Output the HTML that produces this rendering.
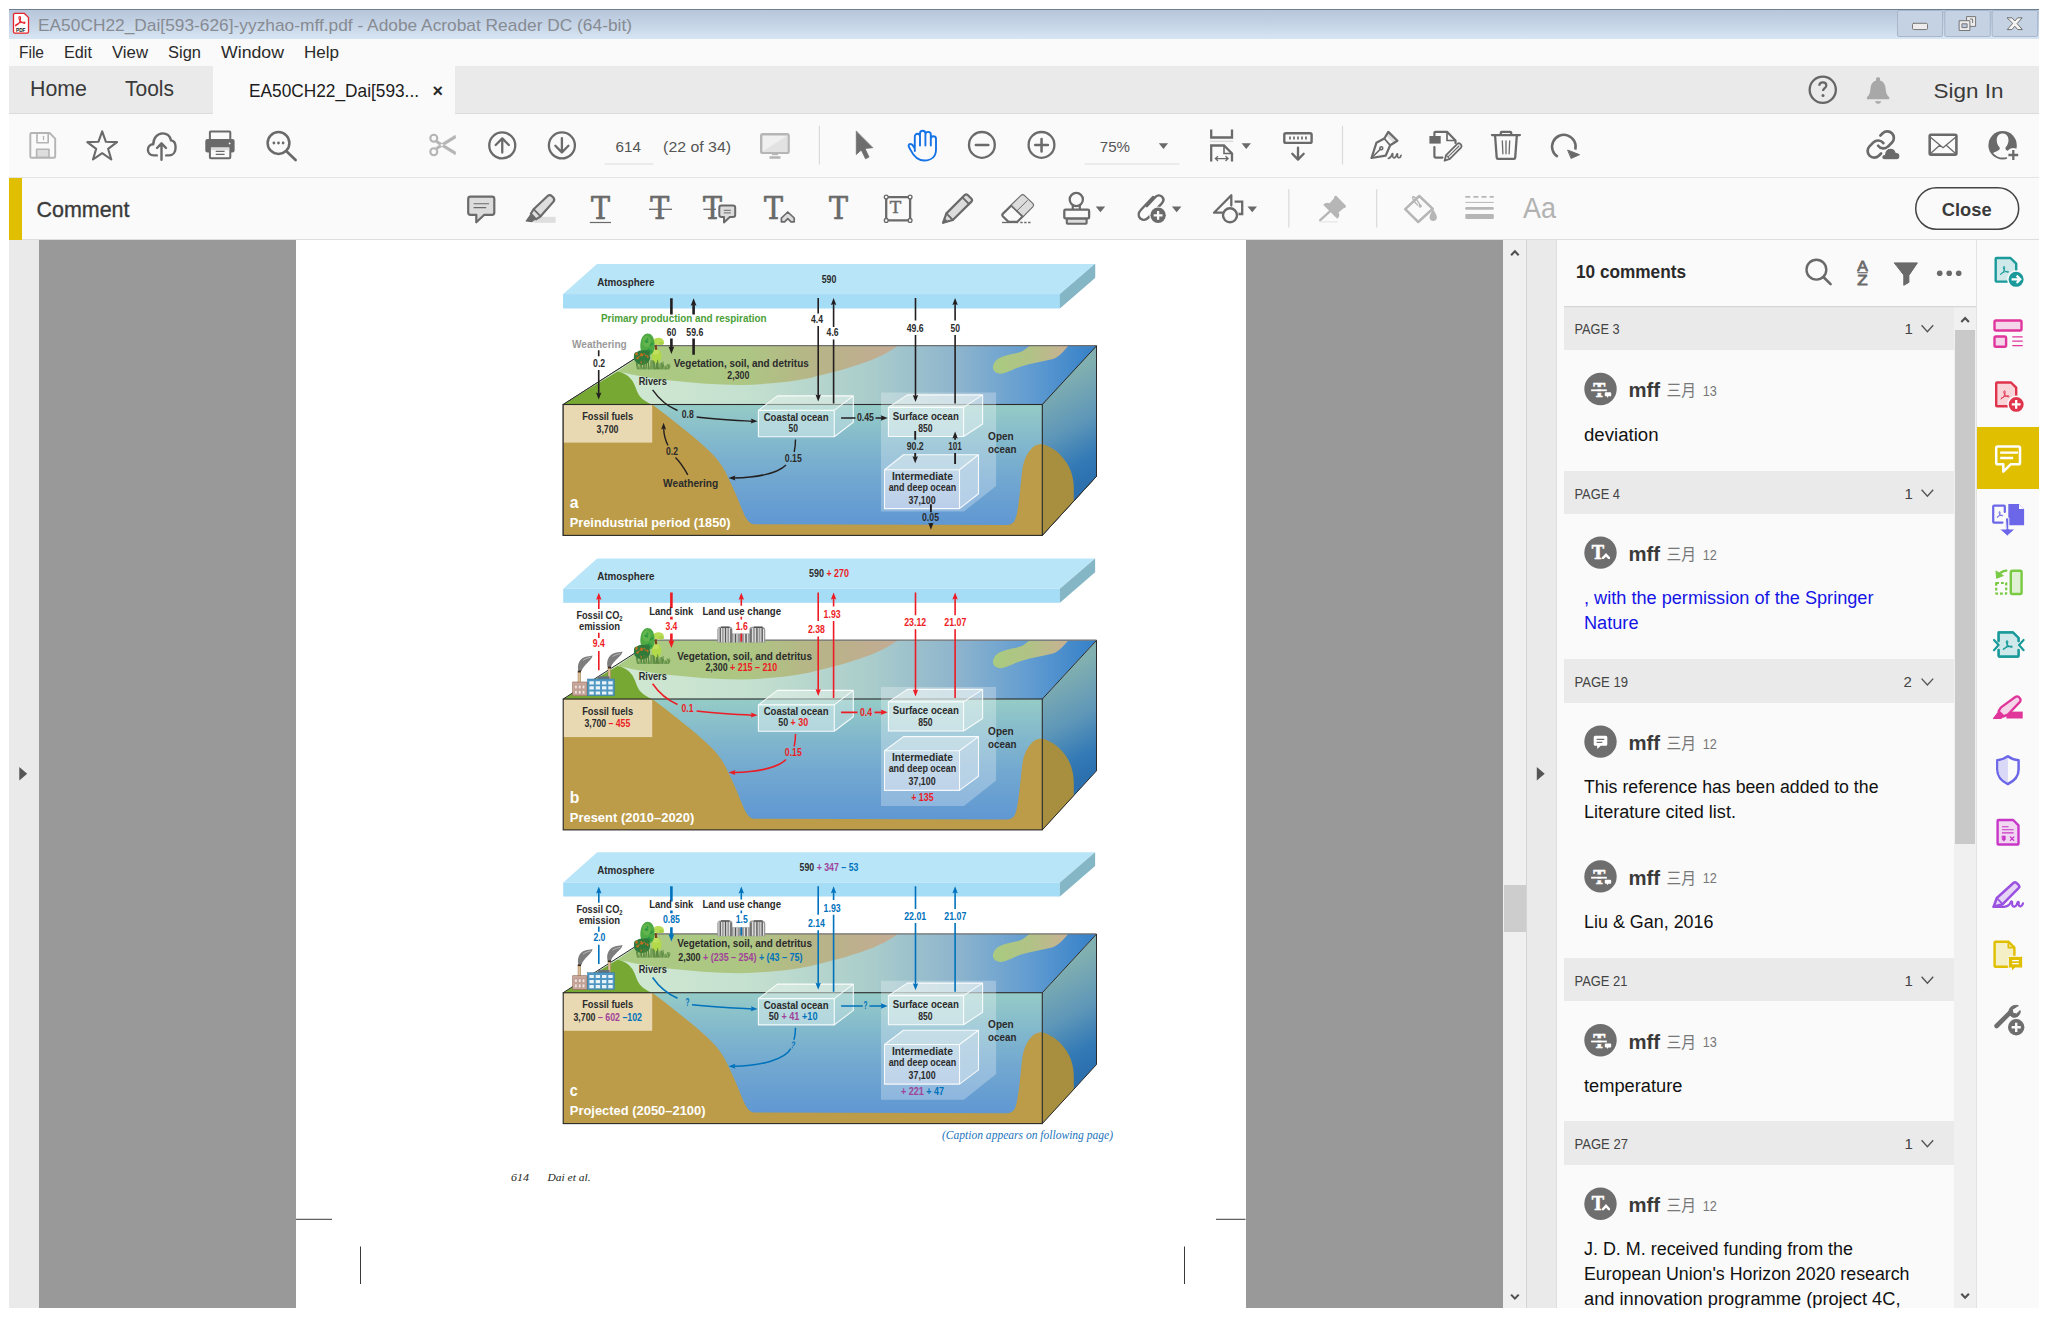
<!DOCTYPE html>
<html lang="en">
<head>
<meta charset="utf-8">
<title>EA50CH22_Dai[593-626]-yyzhao-mff.pdf - Adobe Acrobat Reader DC (64-bit)</title>
<style>
html,body{margin:0;padding:0;}
body{width:2048px;height:1317px;overflow:hidden;background:#fff;position:relative;
 font-family:"Liberation Sans","Noto Sans CJK SC",sans-serif;color:#333;}
.abs{position:absolute;}
.t{position:absolute;white-space:nowrap;line-height:1;}
#win{position:absolute;left:9px;top:9px;width:2030px;height:1299px;background:#fafafa;overflow:hidden;}
/* coordinates inside #win are screen coords minus 9 */
#titlebar{left:0;top:0;width:2030px;height:30px;background:linear-gradient(#b7c6d9 0%,#c3d2e4 45%,#d7e5f3 100%);border-top:1px solid #6f7f92;box-sizing:border-box;}
#menubar{left:0;top:30px;width:2030px;height:27px;background:#fafafa;}
#tabbar{left:0;top:56.5px;width:2030px;height:48px;background:#eaeaea;border-bottom:1px solid #dcdcdc;box-sizing:border-box;}
#tabactive{left:204px;top:56.5px;width:242px;height:48.5px;background:#fafafa;}
#toolbar{left:0;top:105px;width:2030px;height:64px;background:#fafafa;border-bottom:1.5px solid #e4e4e4;box-sizing:border-box;}
#commentbar{left:0;top:169px;width:2030px;height:62px;background:#fafafa;border-bottom:1px solid #dedede;box-sizing:border-box;}
#yellowbar{left:0;top:169px;width:13px;height:61.5px;background:#e0be00;}
#leftstrip{left:0;top:231px;width:29.5px;height:1068px;background:#eaeaea;}
#docbg{left:29.5px;top:231px;width:1464px;height:1068px;background:#999999;}
#page{left:287px;top:231px;width:950px;height:1068px;background:#fff;}
#docscroll{left:1493.5px;top:231px;width:24.5px;height:1068px;background:#f0f0f0;border-right:1px solid #d4d4d4;box-sizing:border-box;}
#docthumb{left:1495px;top:875.5px;width:21.5px;height:47px;background:#cdcdcd;}
#midstrip{left:1518px;top:231px;width:30px;height:1068px;background:#eaeaea;border-right:1px solid #dedede;box-sizing:border-box;}
#panel{left:1547.5px;top:231px;width:419px;height:1068px;background:#fafafa;}
#rstrip{left:1966.5px;top:231px;width:63.5px;height:1068px;background:#fafafa;border-left:1.5px solid #e2e2e2;box-sizing:border-box;}
#ractive{left:1968px;top:418px;width:62px;height:62px;background:#e0be00;}
.ghead{position:absolute;left:1555px;width:390px;height:43.5px;background:#eaeaea;}
#cscroll{left:1945px;top:297px;width:21.5px;height:1002px;background:#f0f0f0;}
#cthumb{left:1946px;top:321px;width:20px;height:514px;background:#c9c9c9;}
</style>
</head>
<body>
<div id="win">
<!--CHROME-->
<div id="titlebar" class="abs"></div>
<div id="menubar" class="abs"></div>
<div id="tabbar" class="abs"></div>
<div id="tabactive" class="abs"></div>
<div id="toolbar" class="abs"></div>
<div id="commentbar" class="abs"></div>
<div id="yellowbar" class="abs"></div>
<div id="leftstrip" class="abs"></div>
<div id="docbg" class="abs"></div>
<div id="page" class="abs"></div>
<div id="docscroll" class="abs"></div>
<div id="docthumb" class="abs"></div>
<div id="midstrip" class="abs"></div>
<div id="panel" class="abs"></div>
<div id="rstrip" class="abs"></div>
<div id="ractive" class="abs"></div>
<div id="cscroll" class="abs"></div>
<div id="cthumb" class="abs"></div>
<!--GHEADS-->
<div class="ghead" style="top:297px"></div>
<div class="ghead" style="top:461.5px"></div>
<div class="ghead" style="top:650.3px"></div>
<div class="ghead" style="top:948.5px"></div>
<div class="ghead" style="top:1112px"></div>
<!--TEXT-->
<svg class="abs" style="left:0;top:0" width="2030" height="1299" viewBox="9 9 2030 1299" font-family="Liberation Sans, Noto Sans CJK SC, sans-serif">
<text x="38.0" y="30.6" font-size="16.6" fill="#878b92" textLength="594.0" lengthAdjust="spacingAndGlyphs">EA50CH22_Dai[593-626]-yyzhao-mff.pdf - Adobe Acrobat Reader DC (64-bit)</text>
<text x="19.0" y="58.0" font-size="16.8" fill="#2a2a2a" textLength="25.0" lengthAdjust="spacingAndGlyphs">File</text>
<text x="64.0" y="58.0" font-size="16.8" fill="#2a2a2a" textLength="28.0" lengthAdjust="spacingAndGlyphs">Edit</text>
<text x="112.0" y="58.0" font-size="16.8" fill="#2a2a2a" textLength="36.0" lengthAdjust="spacingAndGlyphs">View</text>
<text x="168.0" y="58.0" font-size="16.8" fill="#2a2a2a" textLength="33.0" lengthAdjust="spacingAndGlyphs">Sign</text>
<text x="221.0" y="58.0" font-size="16.8" fill="#2a2a2a" textLength="63.0" lengthAdjust="spacingAndGlyphs">Window</text>
<text x="304.0" y="58.0" font-size="16.8" fill="#2a2a2a" textLength="35.0" lengthAdjust="spacingAndGlyphs">Help</text>
<text x="30.0" y="96.0" font-size="22.4" fill="#3a3a3a" textLength="57.0" lengthAdjust="spacingAndGlyphs">Home</text>
<text x="125.0" y="96.0" font-size="22.4" fill="#3a3a3a" textLength="49.0" lengthAdjust="spacingAndGlyphs">Tools</text>
<text x="249.0" y="97.0" font-size="18.4" fill="#1c1c1c" textLength="170.0" lengthAdjust="spacingAndGlyphs">EA50CH22_Dai[593...</text>
<text x="432.5" y="96.5" font-size="19" fill="#2a2a2a" font-weight="bold" textLength="10.5" lengthAdjust="spacingAndGlyphs">×</text>
<text x="1933.5" y="98.3" font-size="20.6" fill="#3a3a3a" textLength="70.0" lengthAdjust="spacingAndGlyphs">Sign In</text>
<text x="615.6" y="151.9" font-size="15.2" fill="#555" textLength="25.4" lengthAdjust="spacingAndGlyphs">614</text>
<text x="663.1" y="151.9" font-size="15.2" fill="#555" textLength="67.9" lengthAdjust="spacingAndGlyphs">(22 of 34)</text>
<text x="1099.8" y="151.9" font-size="15.2" fill="#555" textLength="30.2" lengthAdjust="spacingAndGlyphs">75%</text>
<text x="36.5" y="217.0" font-size="21.8" fill="#3a3a3a" textLength="93.0" lengthAdjust="spacingAndGlyphs" stroke="#3a3a3a" stroke-width=".35">Comment</text>
<text x="1941.7" y="215.7" font-size="19" fill="#3a3a3a" font-weight="bold" textLength="49.9" lengthAdjust="spacingAndGlyphs">Close</text>
<text x="1576.0" y="277.5" font-size="17.6" fill="#2a2a2a" font-weight="bold" textLength="110.0" lengthAdjust="spacingAndGlyphs">10 comments</text>
<text x="1574.5" y="334.0" font-size="15.4" fill="#444" textLength="45.0" lengthAdjust="spacingAndGlyphs">PAGE 3</text>
<text x="1904.5" y="334.0" font-size="15" fill="#444">1</text>
<text x="1574.5" y="498.5" font-size="15.4" fill="#444" textLength="45.5" lengthAdjust="spacingAndGlyphs">PAGE 4</text>
<text x="1904.5" y="498.5" font-size="15" fill="#444">1</text>
<text x="1574.5" y="687.3" font-size="15.4" fill="#444" textLength="53.5" lengthAdjust="spacingAndGlyphs">PAGE 19</text>
<text x="1903.5" y="687.3" font-size="15" fill="#444">2</text>
<text x="1574.5" y="985.5" font-size="15.4" fill="#444" textLength="53.0" lengthAdjust="spacingAndGlyphs">PAGE 21</text>
<text x="1904.5" y="985.5" font-size="15" fill="#444">1</text>
<text x="1574.5" y="1149.0" font-size="15.4" fill="#444" textLength="53.5" lengthAdjust="spacingAndGlyphs">PAGE 27</text>
<text x="1904.5" y="1149.0" font-size="15" fill="#444">1</text>
<text x="1628.5" y="397.3" font-size="19.4" fill="#3a3a3a" font-weight="bold" textLength="31.6" lengthAdjust="spacingAndGlyphs">mff</text>
<text x="1666.5" y="396.4" font-size="16.4" fill="#777" textLength="29.5" lengthAdjust="spacingAndGlyphs">三月</text>
<text x="1702.8" y="396.0" font-size="14.6" fill="#777" textLength="14.1" lengthAdjust="spacingAndGlyphs">13</text>
<text x="1584.0" y="440.5" font-size="19.2" fill="#111" textLength="74.5" lengthAdjust="spacingAndGlyphs">deviation</text>
<text x="1628.5" y="560.9" font-size="19.4" fill="#3a3a3a" font-weight="bold" textLength="31.6" lengthAdjust="spacingAndGlyphs">mff</text>
<text x="1666.5" y="560.0" font-size="16.4" fill="#777" textLength="29.5" lengthAdjust="spacingAndGlyphs">三月</text>
<text x="1702.8" y="559.6" font-size="14.6" fill="#777" textLength="14.1" lengthAdjust="spacingAndGlyphs">12</text>
<text x="1584.0" y="604.1" font-size="19.2" fill="#1414e6" textLength="289.5" lengthAdjust="spacingAndGlyphs">, with the permission of the Springer</text>
<text x="1584.0" y="629.1" font-size="19.2" fill="#1414e6" textLength="54.5" lengthAdjust="spacingAndGlyphs">Nature</text>
<text x="1628.5" y="749.9" font-size="19.4" fill="#3a3a3a" font-weight="bold" textLength="31.6" lengthAdjust="spacingAndGlyphs">mff</text>
<text x="1666.5" y="749.0" font-size="16.4" fill="#777" textLength="29.5" lengthAdjust="spacingAndGlyphs">三月</text>
<text x="1702.8" y="748.6" font-size="14.6" fill="#777" textLength="14.1" lengthAdjust="spacingAndGlyphs">12</text>
<text x="1584.0" y="793.1" font-size="19.2" fill="#111" textLength="294.5" lengthAdjust="spacingAndGlyphs">This reference has been added to the</text>
<text x="1584.0" y="818.1" font-size="19.2" fill="#111" textLength="152.0" lengthAdjust="spacingAndGlyphs">Literature cited list.</text>
<text x="1628.5" y="884.7" font-size="19.4" fill="#3a3a3a" font-weight="bold" textLength="31.6" lengthAdjust="spacingAndGlyphs">mff</text>
<text x="1666.5" y="883.8" font-size="16.4" fill="#777" textLength="29.5" lengthAdjust="spacingAndGlyphs">三月</text>
<text x="1702.8" y="883.4" font-size="14.6" fill="#777" textLength="14.1" lengthAdjust="spacingAndGlyphs">12</text>
<text x="1584.0" y="927.9" font-size="19.2" fill="#111" textLength="129.5" lengthAdjust="spacingAndGlyphs">Liu &amp; Gan, 2016</text>
<text x="1628.5" y="1048.5" font-size="19.4" fill="#3a3a3a" font-weight="bold" textLength="31.6" lengthAdjust="spacingAndGlyphs">mff</text>
<text x="1666.5" y="1047.6" font-size="16.4" fill="#777" textLength="29.5" lengthAdjust="spacingAndGlyphs">三月</text>
<text x="1702.8" y="1047.2" font-size="14.6" fill="#777" textLength="14.1" lengthAdjust="spacingAndGlyphs">13</text>
<text x="1584.0" y="1091.7" font-size="19.2" fill="#111" textLength="98.5" lengthAdjust="spacingAndGlyphs">temperature</text>
<text x="1628.5" y="1212.0" font-size="19.4" fill="#3a3a3a" font-weight="bold" textLength="31.6" lengthAdjust="spacingAndGlyphs">mff</text>
<text x="1666.5" y="1211.1" font-size="16.4" fill="#777" textLength="29.5" lengthAdjust="spacingAndGlyphs">三月</text>
<text x="1702.8" y="1210.7" font-size="14.6" fill="#777" textLength="14.1" lengthAdjust="spacingAndGlyphs">12</text>
<text x="1584.0" y="1255.2" font-size="19.2" fill="#111" textLength="269.0" lengthAdjust="spacingAndGlyphs">J. D. M. received funding from the</text>
<text x="1584.0" y="1280.2" font-size="19.2" fill="#111" textLength="325.5" lengthAdjust="spacingAndGlyphs">European Union's Horizon 2020 research</text>
<text x="1584.0" y="1305.2" font-size="19.2" fill="#111" textLength="316.5" lengthAdjust="spacingAndGlyphs">and innovation programme (project 4C,</text>
</svg>
<!--FIGURE-->
<svg class="abs" style="left:287px;top:231px" width="950" height="1068" viewBox="296 240 950 1068" font-family="Liberation Sans, sans-serif" font-weight="bold" font-size="10.4">
<defs>
<linearGradient id="gTop" gradientUnits="userSpaceOnUse" x1="600" y1="0" x2="1097" y2="0">
<stop offset="0" stop-color="#d2ead2"/><stop offset=".3" stop-color="#c4e0cf"/><stop offset=".55" stop-color="#a9cccb"/><stop offset=".72" stop-color="#8db4cd"/><stop offset=".86" stop-color="#639dd1"/><stop offset="1" stop-color="#3480c8"/>
</linearGradient>
<linearGradient id="gVeg" gradientUnits="userSpaceOnUse" x1="620" y1="0" x2="900" y2="0">
<stop offset="0" stop-color="#aacb82"/><stop offset=".45" stop-color="#adc683"/><stop offset=".7" stop-color="#b7b487"/><stop offset="1" stop-color="#c4ab95"/>
</linearGradient>
<linearGradient id="gIsl" gradientUnits="userSpaceOnUse" x1="993" y1="0" x2="1068" y2="0">
<stop offset="0" stop-color="#a9cb80"/><stop offset=".5" stop-color="#b1c286"/><stop offset="1" stop-color="#c9b093"/>
</linearGradient>
<linearGradient id="gFront" gradientUnits="userSpaceOnUse" x1="0" y1="404" x2="0" y2="526">
<stop offset="0" stop-color="#96ccc6"/><stop offset=".3" stop-color="#83b9cc"/><stop offset=".6" stop-color="#72a8d0"/><stop offset="1" stop-color="#5f97d3"/>
</linearGradient>
<linearGradient id="gSide" gradientUnits="userSpaceOnUse" x1="1045" y1="385" x2="1095" y2="480">
<stop offset="0" stop-color="#82b0b0"/><stop offset=".45" stop-color="#5f97b8"/><stop offset=".8" stop-color="#3279b6"/><stop offset="1" stop-color="#2c70ae"/>
</linearGradient>
<linearGradient id="gInter" gradientUnits="userSpaceOnUse" x1="0" y1="455" x2="0" y2="510">
<stop offset="0" stop-color="#d5e6ee" stop-opacity=".75"/><stop offset="1" stop-color="#c3d2ec" stop-opacity=".85"/>
</linearGradient>
</defs>
<g id="figbase">
<polygon points="597.2,264.1 1095.1,264.1 1059.9,294.3 563.2,294.3" fill="#b9e5f8"/>
<rect x="563.2" y="294.3" width="496.7" height="14" fill="#a5dcf6"/>
<polygon points="1095.1,264.1 1095.1,277.7 1059.9,308.3 1059.9,294.3" fill="#85b6c6"/>
<polygon points="563.2,404.5 655,345.7 1096.5,345.7 1042.3,404.5" fill="url(#gTop)"/>
<path d="M655,345.7 L898,345.7 C889,352 880,357 866,362 C850,368 830,373 810,378 C790,382 765,384.5 740,385 C715,385 690,382.5 665,380 C645,377.5 630,374 617.4,371.5 Z" fill="url(#gVeg)"/>
<path d="M563.2,404.5 L617.4,371.5 C624,372.5 629,376 632.5,381 C636,387 636.5,392 640,396.5 C643,400 647,402.5 652.2,404.5 Z" fill="#76a833"/>
<path d="M1029.8,345.9 L1068,345.9 C1064,351 1060,356 1053,359 C1043,361.5 1031,363.5 1021,366.4 C1012,369.5 1006,373.5 1000.5,373.7 C995,373.5 992,369.5 993.2,365.5 C994.5,361 998,358 1003,356.5 C1010,354 1017,353.5 1021,351.7 C1025,350 1027,347.5 1029.8,345.9 Z" fill="url(#gIsl)"/>
<rect x="563.2" y="404.5" width="479.1" height="130.9" fill="url(#gFront)"/>
<path d="M563.2,404.5 L652.2,404.5 L665.5,414.6 L691.8,435.6 C696,439 700,442.5 703.9,446 C709.5,451 714,455.5 718,460.6 C721.5,465 724.5,470 727,475.2 C729.8,480.600 732.300,486 734.700,491.700 C737.5,497.5 739.5,503.5 742,509.3 C743.5,513 745,516.5 747.1,519.6 C749,522.5 751,524 753.7,524.3 L1008,525 C1012,524.5 1014,522.5 1015.2,519.6 C1016.7,515.5 1017.5,511 1018.1,506.4 C1019,500.5 1019.7,494.5 1020.3,488.8 C1021,482 1021.5,475 1022.5,468.3 C1023.3,463.5 1024.8,459 1026.9,455.1 C1028.8,451.5 1031.3,448.5 1034.2,446.3 C1036.7,444.8 1039.5,444.2 1042.3,444.1 L1042.3,535.4 L563.2,535.4 Z" fill="#bc9c48"/>
<rect x="563.2" y="405" width="89" height="37.6" fill="#e8d9b3"/>
<polygon points="1042.3,404.5 1096.5,345.9 1096.5,476.3 1042.3,535.4" fill="url(#gSide)"/>
<path d="M1042.3,444.1 C1049,446 1054.5,449.5 1059,453.6 C1064,458.5 1068.5,464.5 1070.9,471.2 C1073,477 1073.8,483 1073.8,488.8 L1073.8,501.2 L1042.3,535.4 Z" fill="#a88f3f"/>
<path d="M655,345.7 L1096.5,345.7" stroke="#6f6f6f" stroke-width="1.3" fill="none"/>
<path d="M563.2,404.5 L655,345.7 M1042.3,404.5 L1096.5,345.9 L1096.5,476.3 L1042.3,535.4" stroke="#2a2a2a" stroke-width="1" fill="none" stroke-linejoin="round"/>
<rect x="563.2" y="404.5" width="479.1" height="130.9" fill="none" stroke="#2a2a2a" stroke-width="1.1"/>
<polygon points="881,392.5 996.1,392.5 996.1,485.9 963.9,511.5 881,511.5" fill="#fff" fill-opacity=".27"/>
<polygon points="758.4,410.4 777.4,395.9 853.3,395.9 834.3,410.4" fill="#eaf5ee" fill-opacity="0.5"/>
<polygon points="834.3,410.4 853.3,395.9 853.3,422.2 834.3,436.7" fill="#d8ecee" fill-opacity="0.4"/>
<rect x="758.4" y="410.4" width="75.89999999999998" height="26.30000000000001" fill="#d8ecee" fill-opacity="0.55"/>
<path d="M758.4,410.4 H834.3 V436.7 H758.4 Z M758.4,410.4 L777.4,395.9 H853.3 L834.3,410.4 M853.3,395.9 V422.2 L834.3,436.7" fill="none" stroke="#fff" stroke-opacity=".9" stroke-width="1.1" stroke-linejoin="round"/>
<polygon points="888.4,407.4 907.4,394.9 982.6,394.9 963.6,407.4" fill="#eef6f4" fill-opacity="0.55"/>
<polygon points="963.6,407.4 982.6,394.9 982.6,424.0 963.6,436.5" fill="#e2f0f0" fill-opacity="0.45"/>
<rect x="888.4" y="407.4" width="75.20000000000005" height="29.100000000000023" fill="#e2f0f0" fill-opacity="0.6"/>
<path d="M888.4,407.4 H963.6 V436.5 H888.4 Z M888.4,407.4 L907.4,394.9 H982.6 L963.6,407.4 M982.6,394.9 V424.0 L963.6,436.5" fill="none" stroke="#fff" stroke-opacity=".9" stroke-width="1.1" stroke-linejoin="round"/>
</g>
<g id="panelA" fill="#2b2b2b">
<use href="#figbase"/>
<polygon points="884.5,469.7 903.5,454.8 978.5,454.8 959.5,469.7" fill="#dbe9ee" fill-opacity="0.6"/>
<polygon points="959.5,469.7 978.5,454.8 978.5,493.70000000000005 959.5,508.6" fill="#d3e2ee" fill-opacity="0.55"/>
<rect x="884.5" y="469.7" width="75.0" height="38.900000000000034" fill="url(#gInter)"/>
<path d="M884.5,469.7 H959.5 V508.6 H884.5 Z M884.5,469.7 L903.5,454.8 H978.5 L959.5,469.7 M978.5,454.8 V493.70000000000005 L959.5,508.6" fill="none" stroke="#fff" stroke-opacity=".9" stroke-width="1.1" stroke-linejoin="round"/>
<g id="trees">
<ellipse cx="658.4" cy="341.4" rx="5.4" ry="3.6" fill="#b9dc55"/><ellipse cx="661.5" cy="343.2" rx="2.6" ry="1.8" fill="#a9d246"/>
<ellipse cx="656.6" cy="356.2" rx="4.9" ry="7" fill="#b2d94a"/><ellipse cx="655.6" cy="352" rx="3.4" ry="2.6" fill="#c2e05e"/>
<path d="M654.5,344.8 h2.2 l.6,5 h-2.2z" fill="#7a4518"/>
<path d="M647.6,333.6 C651.5,333.6 653.6,337 654.2,341 C655.2,346 654.6,351.5 651.6,354.2 C649.6,355.8 645.8,355.9 643.6,354.4 C640.6,352 639.8,347 640.6,342.5 C641.4,338 643.6,333.6 647.6,333.6Z" fill="#4faa45"/>
<ellipse cx="646.6" cy="341.5" rx="4.2" ry="5.8" fill="#62b54c"/>
<g fill="#2f9a40"><circle cx="646.9" cy="341.4" r="1.5"/><circle cx="650.6" cy="345.2" r="0.9"/><circle cx="645.4" cy="341.3" r="1.0"/><circle cx="645.2" cy="351.0" r="1.0"/><circle cx="643.6" cy="351.9" r="1.3"/><circle cx="652.0" cy="343.7" r="1.5"/><circle cx="649.0" cy="349.8" r="1.4"/><circle cx="647.5" cy="338.9" r="1.0"/><circle cx="651.0" cy="351.4" r="1.5"/></g>
<ellipse cx="642" cy="357.6" rx="8.2" ry="7.3" fill="#2f7a3b"/><ellipse cx="637.5" cy="355" rx="3.5" ry="3" fill="#2f7a3b"/><ellipse cx="646.5" cy="352.8" rx="3.5" ry="2.8" fill="#2f7a3b"/>
<g fill="#c46f1f"><circle cx="640.9" cy="362.4" r="1.1"/><circle cx="645.8" cy="355.6" r="0.9"/><circle cx="641.3" cy="353.9" r="1.0"/><circle cx="647.5" cy="356.0" r="0.8"/><circle cx="636.5" cy="354.3" r="1.2"/><circle cx="640.4" cy="355.5" r="0.8"/><circle cx="647.8" cy="357.0" r="0.9"/><circle cx="636.7" cy="353.1" r="0.9"/><circle cx="644.1" cy="354.1" r="0.8"/><circle cx="641.9" cy="355.1" r="1.3"/><circle cx="637.5" cy="358.1" r="1.2"/><circle cx="640.9" cy="362.9" r="1.0"/><circle cx="638.9" cy="356.8" r="0.8"/></g>
<path d="M637.5,369.4 L636.2,363.0 M638.6,369.4 L637.3,363.3 M639.8,369.4 L640.7,360.2 M641.1,369.4 L641.3,363.0 M642.2,369.4 L640.9,363.2 M643.2,369.4 L644.3,360.2 M644.6,369.4 L643.6,360.7 M645.7,369.4 L646.4,361.4 M647.1,369.4 L645.8,360.4 M648.4,369.4 L648.4,361.2 M649.4,369.4 L648.1,362.0 M650.8,369.4 L651.0,360.4 M651.9,369.4 L652.2,360.3 M653.4,369.4 L653.4,360.5 M654.5,369.4 L654.3,361.5 M655.5,369.4 L656.5,362.7 M656.4,369.4 L656.8,363.7 M657.5,369.4 L657.4,361.8 M658.6,369.4 L657.6,359.9 M659.7,369.4 L660.2,363.1 M660.8,369.4 L661.6,362.5 M661.9,369.4 L663.2,361.7 M662.9,369.4 L662.0,366.2 M664.2,369.4 L663.4,364.2 M665.3,369.4 L665.2,365.8 M666.3,369.4 L667.5,364.0 M667.7,369.4 L669.2,363.8 M668.6,369.4 L670.1,365.4" stroke="#4f8036" stroke-width=".9" stroke-opacity=".95" fill="none"/>
</g>
<path d="M671.4,298.2 V314.5 M671.4,338.5 V348.0" stroke="#231f20" stroke-width="2.6" fill="none"/><polygon points="671.4,354.0 668.5,346.5 671.4,347.6 674.3,346.5" fill="#231f20"/>
<path d="M693.6,304.2 V314.5 M693.6,338.5 V354.7" stroke="#231f20" stroke-width="2.6" fill="none"/><polygon points="693.6,298.2 696.5,305.7 693.6,304.6 690.7,305.7" fill="#231f20"/>
<path d="M818.2,298.0 V313.6 M818.2,326.0 V396.0" stroke="#231f20" stroke-width="1.6" fill="none"/><polygon points="818.2,401.6 815.5,394.6 818.2,395.6 820.9,394.6" fill="#231f20"/>
<path d="M833.6,303.6 V327.0 M833.6,339.5 V403.5" stroke="#231f20" stroke-width="1.6" fill="none"/><polygon points="833.6,298.0 836.3,305.0 833.6,304.0 830.9,305.0" fill="#231f20"/>
<path d="M915.5,298.0 V320.4 M915.5,335.0 V396.4" stroke="#231f20" stroke-width="1.6" fill="none"/><polygon points="915.5,402.0 912.8,395.0 915.5,396.0 918.2,395.0" fill="#231f20"/>
<path d="M955.1,303.6 V320.4 M955.1,335.0 V403.5" stroke="#231f20" stroke-width="1.6" fill="none"/><polygon points="955.1,298.0 957.8,305.0 955.1,304.0 952.4,305.0" fill="#231f20"/>
<path d="M598.7,350.3 V356.3 M598.7,370.0 V393.8" stroke="#231f20" stroke-width="1.6" fill="none"/><polygon points="598.7,399.4 596.0,392.4 598.7,393.4 601.4,392.4" fill="#231f20"/>
<path d="M915.2,430.9 V439.7 M915.2,452.9 V457.6" stroke="#231f20" stroke-width="1.9" fill="none"/><polygon points="915.2,463.2 912.5,456.2 915.2,457.2 917.9,456.2" fill="#231f20"/>
<path d="M955.1,437.2 V439.7 M955.1,452.9 V463.9" stroke="#231f20" stroke-width="1.9" fill="none"/><polygon points="955.1,431.6 957.8,438.6 955.1,437.6 952.4,438.6" fill="#231f20"/>
<path d="M930.9,504.2 V512.2 M930.9,523.0 V524.2" stroke="#231f20" stroke-width="1.9" fill="none"/><polygon points="930.9,529.8 928.2,522.8 930.9,523.8 933.6,522.8" fill="#231f20"/>
<path d="M841.1,418.0 H855.5 M875.5,418.0 H882.1" stroke="#231f20" stroke-width="1.6" fill="none"/><polygon points="887.7,418.0 880.7,420.7 881.7,418.0 880.7,415.3" fill="#231f20"/>
<path d="M652.6,389.8 C659,399 667,406 677.5,410.5 M696.6,417 C715,419.5 735,420.3 752,421.2" stroke="#231f20" stroke-width="1.4" fill="none"/><polygon points="757.6,421.3 750.7,423.6 751.8,421.1 750.9,418.6" fill="#231f20"/>
<path d="M795.5,439.5 C795.5,444 795,448 794.2,452 M786,465 C778,473 758,477.5 734,478" stroke="#231f20" stroke-width="1.4" fill="none"/><polygon points="728.6,478.1 735.4,475.6 734.4,478.1 735.4,480.6" fill="#231f20"/>
<path d="M687.8,474.9 C684,468 680,462 675.5,457.5 M668,445.5 C665,439.5 663.8,434 663.7,428.5" stroke="#231f20" stroke-width="1.4" fill="none"/><polygon points="663.6,422.8 666.1,429.6 663.6,428.6 661.1,429.6" fill="#231f20"/>
<text x="597.2" y="285.8" textLength="57.3" lengthAdjust="spacingAndGlyphs">Atmosphere</text>
<text x="829.0" y="282.8" text-anchor="middle" textLength="14.7" lengthAdjust="spacingAndGlyphs">590</text>
<text x="601.0" y="322.0" textLength="165.6" lengthAdjust="spacingAndGlyphs" fill="#4c9f38">Primary production and respiration</text>
<text x="671.4" y="335.9" text-anchor="middle" textLength="9.5" lengthAdjust="spacingAndGlyphs">60</text>
<text x="694.8" y="335.9" text-anchor="middle" textLength="17.0" lengthAdjust="spacingAndGlyphs">59.6</text>
<text x="817.0" y="322.7" text-anchor="middle" textLength="12.0" lengthAdjust="spacingAndGlyphs">4.4</text>
<text x="832.6" y="335.9" text-anchor="middle" textLength="12.0" lengthAdjust="spacingAndGlyphs">4.6</text>
<text x="915.2" y="331.7" text-anchor="middle" textLength="17.0" lengthAdjust="spacingAndGlyphs">49.6</text>
<text x="955.3" y="331.7" text-anchor="middle" textLength="9.5" lengthAdjust="spacingAndGlyphs">50</text>
<text x="572.0" y="347.6" textLength="54.7" lengthAdjust="spacingAndGlyphs" fill="#9a9a9a">Weathering</text>
<text x="599.1" y="367.1" text-anchor="middle" textLength="12.0" lengthAdjust="spacingAndGlyphs">0.2</text>
<text x="673.8" y="366.7" textLength="134.9" lengthAdjust="spacingAndGlyphs">Vegetation, soil, and detritus</text>
<text x="738.3" y="378.8" text-anchor="middle" textLength="22.0" lengthAdjust="spacingAndGlyphs">2,300</text>
<text x="638.7" y="385.4" textLength="28.1" lengthAdjust="spacingAndGlyphs">Rivers</text>
<text x="582.2" y="420.3" textLength="50.9" lengthAdjust="spacingAndGlyphs">Fossil fuels</text>
<text x="607.5" y="432.6" text-anchor="middle" textLength="22.0" lengthAdjust="spacingAndGlyphs">3,700</text>
<text x="687.8" y="417.7" text-anchor="middle" textLength="12.0" lengthAdjust="spacingAndGlyphs">0.8</text>
<text x="763.7" y="420.9" textLength="64.8" lengthAdjust="spacingAndGlyphs">Coastal ocean</text>
<text x="793.3" y="431.9" text-anchor="middle" textLength="9.5" lengthAdjust="spacingAndGlyphs">50</text>
<text x="865.4" y="421.4" text-anchor="middle" textLength="17.0" lengthAdjust="spacingAndGlyphs">0.45</text>
<text x="892.8" y="419.6" textLength="66.0" lengthAdjust="spacingAndGlyphs">Surface ocean</text>
<text x="925.5" y="431.6" text-anchor="middle" textLength="14.3" lengthAdjust="spacingAndGlyphs">850</text>
<text x="988.1" y="440.4" textLength="25.6" lengthAdjust="spacingAndGlyphs">Open</text>
<text x="988.1" y="453.3" textLength="28.3" lengthAdjust="spacingAndGlyphs">ocean</text>
<text x="915.2" y="450.0" text-anchor="middle" textLength="17.0" lengthAdjust="spacingAndGlyphs">90.2</text>
<text x="955.1" y="450.0" text-anchor="middle" textLength="13.5" lengthAdjust="spacingAndGlyphs">101</text>
<text x="922.4" y="480.0" text-anchor="middle" textLength="61.0" lengthAdjust="spacingAndGlyphs">Intermediate</text>
<text x="922.4" y="490.7" text-anchor="middle" textLength="67.5" lengthAdjust="spacingAndGlyphs">and deep ocean</text>
<text x="922.1" y="503.5" text-anchor="middle" textLength="27.0" lengthAdjust="spacingAndGlyphs">37,100</text>
<text x="930.5" y="520.8" text-anchor="middle" textLength="17.0" lengthAdjust="spacingAndGlyphs">0.05</text>
<text x="672.0" y="454.7" text-anchor="middle" textLength="12.0" lengthAdjust="spacingAndGlyphs">0.2</text>
<text x="793.3" y="462.1" text-anchor="middle" textLength="17.0" lengthAdjust="spacingAndGlyphs">0.15</text>
<text x="663.1" y="487.3" textLength="55.2" lengthAdjust="spacingAndGlyphs">Weathering</text>
<text x="569.8" y="507.9" textLength="8.8" lengthAdjust="spacingAndGlyphs" font-size="16.5" fill="#ffffff">a</text>
<text x="569.8" y="527.2" textLength="160.8" lengthAdjust="spacingAndGlyphs" font-size="12.8" fill="#ffffff">Preindustrial period (1850)</text>
</g>
<g id="panelB" fill="#2b2b2b">
<use href="#figbase" y="294.5"/>
<g transform="translate(0,294.5)"><polygon points="884.5,456.3 903.5,442.1 978.5,442.1 959.5,456.3" fill="#dbe9ee" fill-opacity="0.6"/>
<polygon points="959.5,456.3 978.5,442.1 978.5,481.7 959.5,495.9" fill="#d3e2ee" fill-opacity="0.55"/>
<rect x="884.5" y="456.3" width="75.0" height="39.599999999999966" fill="url(#gInter)"/>
<path d="M884.5,456.3 H959.5 V495.9 H884.5 Z M884.5,456.3 L903.5,442.1 H978.5 L959.5,456.3 M978.5,442.1 V481.7 L959.5,495.9" fill="none" stroke="#fff" stroke-opacity=".9" stroke-width="1.1" stroke-linejoin="round"/></g>
<use href="#trees" y="294.5"/>
<g id="factory">
<path d="M578.4,671 C577,665 579,659.8 583.6,657.4 C586.6,655.9 590,656.2 592.6,655.4 C591.8,658.8 589.6,660.4 587.8,662.4 C585,665.2 582.4,667.8 581.6,671 Z" fill="#7d7d7d"/>
<path d="M583,660.5 C585.5,658.5 588.5,658 590.5,657.2" stroke="#c4c4c4" stroke-width=".8" fill="none"/>
<path d="M607.6,667 C606.2,661 608.4,655.8 613.2,653.4 C616.2,651.9 619.8,652.2 622.6,651.4 C621.8,654.800 619.4,656.400 617.4,658.400 C614.4,661.400 611.800,663.800 611,667 Z" fill="#7d7d7d"/>
<path d="M612.5,656.5 C615,654.8 618,654.4 620.3,653.6" stroke="#c4c4c4" stroke-width=".8" fill="none"/>
<rect x="578" y="672" width="2.8" height="10.5" fill="#dcbf95" stroke="#8a6a4a" stroke-width=".4"/><rect x="577.8" y="670.6" width="3.2" height="1.8" fill="#3a2a20"/>
<rect x="608" y="668" width="2.8" height="11.5" fill="#dcbf95" stroke="#8a6a4a" stroke-width=".4"/><rect x="607.8" y="666.6" width="3.2" height="1.8" fill="#3a2a20"/>
<rect x="572.7" y="682" width="14.3" height="13.8" fill="#c9a79b" stroke="#8f6a5e" stroke-width=".6"/>
<path d="M574.6,685.2h2.6v3.6h-2.6z M578.4,685.2h2.6v3.6h-2.6z M582.2,685.2h2.6v3.6h-2.6z M574.6,690.4h2.6v3.6h-2.6z M578.4,690.4h2.6v3.6h-2.6z M582.2,690.4h2.6v3.6h-2.6z" fill="#efe2dc" stroke="#8f6a5e" stroke-width=".3"/>
<rect x="598" y="676.3" width="11.5" height="3" fill="#66737c"/>
<rect x="587.4" y="679" width="27.1" height="16.8" fill="#4f97c2" stroke="#3a789f" stroke-width=".5"/>
<path d="M589.4,681.2h4.4v3.2h-4.4z M595.7,681.2h4.4v3.2h-4.4z M602,681.2h4.4v3.2h-4.4z M608.3,681.2h4.4v3.2h-4.4z M589.4,686.3h4.4v3.2h-4.4z M595.7,686.3h4.4v3.2h-4.4z M602,686.3h4.4v3.2h-4.4z M608.3,686.3h4.4v3.2h-4.4z M589.4,691.4h4.4v3.2h-4.4z M595.7,691.4h4.4v3.2h-4.4z M602,691.4h4.4v3.2h-4.4z M608.3,691.4h4.4v3.2h-4.4z" fill="#e8f3f8"/>
</g>
<g id="luc">
<path d="M717.3,642.5 V630 q0,-2.8 3,-3.2 h9.5 q2.6,.2 2.6,3 v3.7 h17 v-3.7 q0,-2.8 2.6,-3 h9.7 q3.6,.4 3.6,3.2 v12.5 z" fill="#9a9a9a"/>
<path d="M719,628v14 M721.6,628v14 M724.2,627.5v15 M726.9,627.5v15 M729.6,628v14 M734,634v8.5 M737,634v8.5 M744.4,634v8.5 M747.6,634v8.5 M752.6,628v14 M755.4,627.5v15 M758.1,627.5v15 M760.9,628v14 M763.5,629v13" stroke="#ececec" stroke-width=".9" fill="none"/>
<path d="M720.3,628v14 M725.5,627.5v15 M731,629v13.5 M735.5,634v8.5 M746,634v8.5 M750.9,629v13.5 M757,627.5v15 M762.2,628v14" stroke="#444" stroke-width=".8" fill="none"/>
<path d="M721,627.2 h8.5 M753.8,627.2 h8.8" stroke="#555" stroke-width="1.5"/>
</g>
<path d="M598.8,598.4 V609.0 M598.8,632.8 V638.0 M598.8,651.1 V670.2" stroke="#ed1c24" stroke-width="1.6" fill="none"/><polygon points="598.8,592.8 601.5,599.8 598.8,598.8 596.1,599.8" fill="#ed1c24"/>
<path d="M671.4,592.5 V607.9 M671.4,616.7 V619.6 M671.4,633.5 V641.9" stroke="#ed1c24" stroke-width="2.6" fill="none"/><polygon points="671.4,647.9 668.5,640.4 671.4,641.4 674.3,640.4" fill="#ed1c24"/>
<path d="M741.3,598.4 V605.7 M741.3,616.7 V619.6 M741.3,633.5 V641.6" stroke="#ed1c24" stroke-width="1.6" fill="none"/><polygon points="741.3,592.8 744.0,599.8 741.3,598.8 738.6,599.8" fill="#ed1c24"/>
<path d="M818.2,592.5 V621.1 M818.2,636.5 V690.4" stroke="#ed1c24" stroke-width="1.6" fill="none"/><polygon points="818.2,696.0 815.5,689.0 818.2,690.0 820.9,689.0" fill="#ed1c24"/>
<path d="M833.6,598.1 V606.4 M833.6,621.1 V698.0" stroke="#ed1c24" stroke-width="1.6" fill="none"/><polygon points="833.6,592.5 836.3,599.5 833.6,598.5 830.9,599.5" fill="#ed1c24"/>
<path d="M915.5,592.5 V615.2 M915.5,629.3 V690.9" stroke="#ed1c24" stroke-width="1.6" fill="none"/><polygon points="915.5,696.5 912.8,689.5 915.5,690.5 918.2,689.5" fill="#ed1c24"/>
<path d="M955.1,598.1 V615.2 M955.1,629.3 V698.0" stroke="#ed1c24" stroke-width="1.6" fill="none"/><polygon points="955.1,592.5 957.8,599.5 955.1,598.5 952.4,599.5" fill="#ed1c24"/>
<path d="M841.1,712.3 H857.5 M874.5,712.3 H882.1" stroke="#ed1c24" stroke-width="1.7" fill="none"/><polygon points="887.7,712.3 880.7,715.0 881.7,712.3 880.7,709.6" fill="#ed1c24"/>
<path d="M652.6,683.8 C659,693.0 667,700.0 677.5,704.5 M696.6,711.0 C715,713.5 735,714.3 752,715.2" stroke="#ed1c24" stroke-width="1.5" fill="none"/><polygon points="757.6,715.3 750.7,717.6 751.8,715.1 750.9,712.6" fill="#ed1c24"/>
<path d="M795.5,734.0 C795.5,738.5 795,742.5 794.2,746.5 M786,759.5 C778,767.5 758,772.0 734,772.5" stroke="#ed1c24" stroke-width="1.5" fill="none"/><polygon points="728.6,772.6 735.4,770.1 734.4,772.6 735.4,775.1" fill="#ed1c24"/>
<text x="597.2" y="580.2" textLength="57.3" lengthAdjust="spacingAndGlyphs">Atmosphere</text>
<text x="576.4" y="618.9" textLength="46.1" lengthAdjust="spacingAndGlyphs">Fossil CO<tspan font-size="6.5" dy="2">2</tspan></text>
<text x="578.9" y="629.9" textLength="41.1" lengthAdjust="spacingAndGlyphs">emission</text>
<text x="649.2" y="614.5" textLength="44.1" lengthAdjust="spacingAndGlyphs">Land sink</text>
<text x="702.4" y="614.5" textLength="78.7" lengthAdjust="spacingAndGlyphs">Land use change</text>
<text x="677.2" y="659.9" textLength="134.7" lengthAdjust="spacingAndGlyphs">Vegetation, soil, and detritus</text>
<text x="638.7" y="679.6" textLength="28.1" lengthAdjust="spacingAndGlyphs">Rivers</text>
<text x="582.2" y="714.6" textLength="50.9" lengthAdjust="spacingAndGlyphs">Fossil fuels</text>
<text x="763.7" y="715.2" textLength="64.8" lengthAdjust="spacingAndGlyphs">Coastal ocean</text>
<text x="892.8" y="713.9" textLength="66.0" lengthAdjust="spacingAndGlyphs">Surface ocean</text>
<text x="925.5" y="726.0" text-anchor="middle" textLength="14.3" lengthAdjust="spacingAndGlyphs">850</text>
<text x="988.1" y="734.7" textLength="25.6" lengthAdjust="spacingAndGlyphs">Open</text>
<text x="988.1" y="747.6" textLength="28.3" lengthAdjust="spacingAndGlyphs">ocean</text>
<text x="922.4" y="761.4" text-anchor="middle" textLength="61.0" lengthAdjust="spacingAndGlyphs">Intermediate</text>
<text x="922.4" y="772.1" text-anchor="middle" textLength="67.5" lengthAdjust="spacingAndGlyphs">and deep ocean</text>
<text x="922.1" y="785.0" text-anchor="middle" textLength="27.0" lengthAdjust="spacingAndGlyphs">37,100</text>
<text x="809.1" y="577.1" textLength="39.9" lengthAdjust="spacingAndGlyphs">590 <tspan fill="#ed1c24">+ 270</tspan></text>
<text x="598.8" y="646.7" text-anchor="middle" textLength="12.0" lengthAdjust="spacingAndGlyphs" fill="#ed1c24">9.4</text>
<text x="671.4" y="629.9" text-anchor="middle" textLength="12.0" lengthAdjust="spacingAndGlyphs" fill="#ed1c24">3.4</text>
<text x="741.7" y="629.9" text-anchor="middle" textLength="12.0" lengthAdjust="spacingAndGlyphs" fill="#ed1c24">1.6</text>
<text x="816.4" y="632.8" text-anchor="middle" textLength="17.0" lengthAdjust="spacingAndGlyphs" fill="#ed1c24">2.38</text>
<text x="832.1" y="617.7" text-anchor="middle" textLength="17.0" lengthAdjust="spacingAndGlyphs" fill="#ed1c24">1.93</text>
<text x="915.2" y="626.2" text-anchor="middle" textLength="22.0" lengthAdjust="spacingAndGlyphs" fill="#ed1c24">23.12</text>
<text x="955.3" y="626.2" text-anchor="middle" textLength="22.0" lengthAdjust="spacingAndGlyphs" fill="#ed1c24">21.07</text>
<text x="705.4" y="671.4" textLength="71.8" lengthAdjust="spacingAndGlyphs">2,300 <tspan fill="#ed1c24">+ 215 – 210</tspan></text>
<text x="584.4" y="726.6" textLength="45.9" lengthAdjust="spacingAndGlyphs">3,700 <tspan fill="#ed1c24">– 455</tspan></text>
<text x="687.5" y="711.6" text-anchor="middle" textLength="12.0" lengthAdjust="spacingAndGlyphs" fill="#ed1c24">0.1</text>
<text x="778.2" y="726.0" textLength="30.0" lengthAdjust="spacingAndGlyphs">50 <tspan fill="#ed1c24">+ 30</tspan></text>
<text x="866.0" y="715.6" text-anchor="middle" textLength="12.0" lengthAdjust="spacingAndGlyphs" fill="#ed1c24">0.4</text>
<text x="793.3" y="756.4" text-anchor="middle" textLength="17.0" lengthAdjust="spacingAndGlyphs" fill="#ed1c24">0.15</text>
<text x="922.4" y="801.4" text-anchor="middle" textLength="22.5" lengthAdjust="spacingAndGlyphs" fill="#ed1c24">+ 135</text>
<text x="569.8" y="802.5" textLength="9.6" lengthAdjust="spacingAndGlyphs" font-size="16.5" fill="#ffffff">b</text>
<text x="569.8" y="821.7" textLength="124.5" lengthAdjust="spacingAndGlyphs" font-size="12.8" fill="#ffffff">Present (2010–2020)</text>
</g>
<g id="panelC" fill="#2b2b2b">
<use href="#figbase" y="588.2"/>
<g transform="translate(0,588.2)"><polygon points="884.5,456.3 903.5,442.1 978.5,442.1 959.5,456.3" fill="#dbe9ee" fill-opacity="0.6"/>
<polygon points="959.5,456.3 978.5,442.1 978.5,481.7 959.5,495.9" fill="#d3e2ee" fill-opacity="0.55"/>
<rect x="884.5" y="456.3" width="75.0" height="39.599999999999966" fill="url(#gInter)"/>
<path d="M884.5,456.3 H959.5 V495.9 H884.5 Z M884.5,456.3 L903.5,442.1 H978.5 L959.5,456.3 M978.5,442.1 V481.7 L959.5,495.9" fill="none" stroke="#fff" stroke-opacity=".9" stroke-width="1.1" stroke-linejoin="round"/></g>
<use href="#trees" y="588.2"/>
<use href="#factory" y="293.7"/><use href="#luc" y="293.7"/>
<path d="M598.8,892.1 V902.7 M598.8,926.5 V931.7 M598.8,944.8 V963.9" stroke="#0072bc" stroke-width="1.6" fill="none"/><polygon points="598.8,886.5 601.5,893.5 598.8,892.5 596.1,893.5" fill="#0072bc"/>
<path d="M671.4,886.2 V901.6 M671.4,910.4 V913.3 M671.4,927.2 V935.6" stroke="#0072bc" stroke-width="2.6" fill="none"/><polygon points="671.4,941.6 668.5,934.1 671.4,935.1 674.3,934.1" fill="#0072bc"/>
<path d="M741.3,892.1 V899.4 M741.3,910.4 V913.3 M741.3,927.2 V935.3" stroke="#0072bc" stroke-width="1.6" fill="none"/><polygon points="741.3,886.5 744.0,893.5 741.3,892.5 738.6,893.5" fill="#0072bc"/>
<path d="M818.2,886.2 V914.8 M818.2,930.2 V984.1" stroke="#0072bc" stroke-width="1.6" fill="none"/><polygon points="818.2,989.7 815.5,982.7 818.2,983.7 820.9,982.7" fill="#0072bc"/>
<path d="M833.6,891.8 V900.1 M833.6,914.8 V991.7" stroke="#0072bc" stroke-width="1.6" fill="none"/><polygon points="833.6,886.2 836.3,893.2 833.6,892.2 830.9,893.2" fill="#0072bc"/>
<path d="M915.5,886.2 V908.9 M915.5,923.0 V984.6" stroke="#0072bc" stroke-width="1.6" fill="none"/><polygon points="915.5,990.2 912.8,983.2 915.5,984.2 918.2,983.2" fill="#0072bc"/>
<path d="M955.1,891.8 V908.9 M955.1,923.0 V991.7" stroke="#0072bc" stroke-width="1.6" fill="none"/><polygon points="955.1,886.2 957.8,893.2 955.1,892.2 952.4,893.2" fill="#0072bc"/>
<path d="M841.1,1006.0 H862.8 M869.4,1006.0 H882.1" stroke="#0072bc" stroke-width="1.7" fill="none"/><polygon points="887.7,1006.0 880.7,1008.7 881.7,1006.0 880.7,1003.3" fill="#0072bc"/>
<path d="M652.6,977.5 C659,986.7 667,993.7 677.5,998.2 M692,1004.7 C715,1007.2 735,1008.0 752,1008.9" stroke="#0072bc" stroke-width="1.5" fill="none"/><polygon points="757.6,1009.0 750.7,1011.3 751.8,1008.8 750.9,1006.3" fill="#0072bc"/>
<path d="M795.5,1027.7 C795.5,1032.2 795,1036.2 794,1039.7 M790.8,1048.7 C785,1059.2 762,1065.7 734,1066.2" stroke="#0072bc" stroke-width="1.5" fill="none"/><polygon points="728.6,1066.3 735.4,1063.8 734.4,1066.3 735.4,1068.8" fill="#0072bc"/>
<text x="597.2" y="873.9" textLength="57.3" lengthAdjust="spacingAndGlyphs">Atmosphere</text>
<text x="576.4" y="912.6" textLength="46.1" lengthAdjust="spacingAndGlyphs">Fossil CO<tspan font-size="6.5" dy="2">2</tspan></text>
<text x="578.9" y="923.6" textLength="41.1" lengthAdjust="spacingAndGlyphs">emission</text>
<text x="649.2" y="908.2" textLength="44.1" lengthAdjust="spacingAndGlyphs">Land sink</text>
<text x="702.4" y="908.2" textLength="78.7" lengthAdjust="spacingAndGlyphs">Land use change</text>
<text x="677.2" y="947.2" textLength="134.7" lengthAdjust="spacingAndGlyphs">Vegetation, soil, and detritus</text>
<text x="638.7" y="973.3" textLength="28.1" lengthAdjust="spacingAndGlyphs">Rivers</text>
<text x="582.2" y="1008.3" textLength="50.9" lengthAdjust="spacingAndGlyphs">Fossil fuels</text>
<text x="763.7" y="1008.9" textLength="64.8" lengthAdjust="spacingAndGlyphs">Coastal ocean</text>
<text x="892.8" y="1007.6" textLength="66.0" lengthAdjust="spacingAndGlyphs">Surface ocean</text>
<text x="925.5" y="1019.7" text-anchor="middle" textLength="14.3" lengthAdjust="spacingAndGlyphs">850</text>
<text x="988.1" y="1028.4" textLength="25.6" lengthAdjust="spacingAndGlyphs">Open</text>
<text x="988.1" y="1041.3" textLength="28.3" lengthAdjust="spacingAndGlyphs">ocean</text>
<text x="922.4" y="1055.1" text-anchor="middle" textLength="61.0" lengthAdjust="spacingAndGlyphs">Intermediate</text>
<text x="922.4" y="1065.8" text-anchor="middle" textLength="67.5" lengthAdjust="spacingAndGlyphs">and deep ocean</text>
<text x="922.1" y="1078.7" text-anchor="middle" textLength="27.0" lengthAdjust="spacingAndGlyphs">37,100</text>
<text x="799.6" y="870.6" textLength="58.8" lengthAdjust="spacingAndGlyphs">590 <tspan fill="#a0429a">+ 347</tspan><tspan fill="#0072bc"> – 53</tspan></text>
<text x="599.4" y="941.0" text-anchor="middle" textLength="12.0" lengthAdjust="spacingAndGlyphs" fill="#0072bc">2.0</text>
<text x="671.4" y="923.4" text-anchor="middle" textLength="17.0" lengthAdjust="spacingAndGlyphs" fill="#0072bc">0.85</text>
<text x="741.7" y="923.4" text-anchor="middle" textLength="12.0" lengthAdjust="spacingAndGlyphs" fill="#0072bc">1.5</text>
<text x="816.4" y="926.8" text-anchor="middle" textLength="17.0" lengthAdjust="spacingAndGlyphs" fill="#0072bc">2.14</text>
<text x="832.1" y="912.1" text-anchor="middle" textLength="17.0" lengthAdjust="spacingAndGlyphs" fill="#0072bc">1.93</text>
<text x="915.2" y="919.7" text-anchor="middle" textLength="22.0" lengthAdjust="spacingAndGlyphs" fill="#0072bc">22.01</text>
<text x="955.3" y="919.7" text-anchor="middle" textLength="22.0" lengthAdjust="spacingAndGlyphs" fill="#0072bc">21.07</text>
<text x="678.2" y="960.8" textLength="124.2" lengthAdjust="spacingAndGlyphs">2,300 <tspan fill="#a0429a">+ (235 – 254)</tspan><tspan fill="#0072bc"> + (43 – 75)</tspan></text>
<text x="573.4" y="1020.6" textLength="68.6" lengthAdjust="spacingAndGlyphs">3,700 <tspan fill="#a0429a">– 602</tspan><tspan fill="#0072bc"> –102</tspan></text>
<text x="687.5" y="1005.5" text-anchor="middle" textLength="4.0" lengthAdjust="spacingAndGlyphs" fill="#0072bc">?</text>
<text x="768.7" y="1019.7" textLength="48.8" lengthAdjust="spacingAndGlyphs">50 <tspan fill="#a0429a">+ 41</tspan><tspan fill="#0072bc"> +10</tspan></text>
<text x="865.6" y="1009.4" text-anchor="middle" textLength="4.0" lengthAdjust="spacingAndGlyphs" fill="#0072bc">?</text>
<text x="793.0" y="1048.5" text-anchor="middle" textLength="4.0" lengthAdjust="spacingAndGlyphs" fill="#0072bc" transform="rotate(14 793 1045)">?</text>
<text x="900.9" y="1095.4" textLength="43.2" lengthAdjust="spacingAndGlyphs"><tspan fill="#a0429a">+ 221</tspan><tspan fill="#0072bc"> + 47</tspan></text>
<text x="569.8" y="1095.9" textLength="8.0" lengthAdjust="spacingAndGlyphs" font-size="16.5" fill="#ffffff">c</text>
<text x="569.8" y="1115.3" textLength="135.7" lengthAdjust="spacingAndGlyphs" font-size="12.8" fill="#ffffff">Projected (2050–2100)</text>
</g>
<g font-family="Liberation Serif, serif" font-weight="normal" font-style="italic">
<text x="942" y="1138.5" font-size="11.6" fill="#1c75bc" textLength="171" lengthAdjust="spacingAndGlyphs">(Caption appears on following page)</text>
<text x="511" y="1180.5" font-size="10.5" fill="#231f20" textLength="18" lengthAdjust="spacingAndGlyphs">614</text>
<text x="547.5" y="1180.5" font-size="10.5" fill="#231f20" textLength="43" lengthAdjust="spacingAndGlyphs">Dai et al.</text>
</g>
<path d="M296,1219.3 H332 M1216,1219.3 H1245.5 M360.5,1246.5 V1284 M1184.5,1246.5 V1284" stroke="#3a3a3a" stroke-width="1" fill="none"/>
</svg>
<!--ICONS-->
<svg class="abs" style="left:0;top:0" width="2030" height="1299" viewBox="9 9 2030 1299" fill="none" stroke-linecap="round" stroke-linejoin="round">
<!-- ===== title bar ===== -->
<g id="ic-title">
<path d="M14.800,13.300 h9.400 l4.300,4.300 v14.200 q0,1.300 -1.300,1.300 h-12.400 q-1.300,0 -1.300,-1.300 v-17.200 q0,-1.300 1.300,-1.300z" fill="#fff" stroke="#e8232a" stroke-width="1.300"/>
<path d="M16,25.5 c2.5,-1 4.5,-4 4.6,-8 c0,-1.4 -1.7,-1.4 -1.7,0 c0,2.5 2.2,5.2 5,5.8 c1.4,.3 1.4,-1.4 0,-1.3 c-2.8,.1 -6,1.300 -7.800,2.700 c-1,.9 -.3,1.6 -.1,.8z" stroke="#e8232a" stroke-width="1.1"/>
<text x="16" y="31.600" font-family="Liberation Sans, sans-serif" font-weight="bold" font-size="4.800" fill="#111" stroke="none" textLength="9.500" lengthAdjust="spacingAndGlyphs">PDF</text>
<g stroke="#a7b6ca" stroke-width="1" fill="#c4d2e4">
<rect x="1897.5" y="10.5" width="45" height="26" rx="1.5"/><rect x="1944.8" y="10.5" width="45.5" height="26" rx="1.5"/><rect x="1992.2" y="10.5" width="45.5" height="26" rx="1.5"/>
</g>
<rect x="1912.5" y="23.3" width="15" height="6.3" rx="1.2" fill="#ececec" stroke="#777" stroke-width="1"/>
<g fill="#ececec" stroke="#777" stroke-width="1" stroke-linejoin="miter"><path d="M1967,16.600 h8.600 v9.800 h-8.600z"/><path d="M1959.500,20.700 h10.400 v9.800 h-10.400z"/><path d="M1962.300,23.800 h4.800 v3.800 h-4.800z" fill="#b9c7da"/><path d="M1970.300,19 h2.300 v3.600" fill="none"/></g>
<path d="M2007.400,17.800 h4.600 l2.800,3.200 l2.800,-3.200 h4.600 l-5.100,5.800 l5.300,6 h-4.700 l-2.900,-3.400 l-2.900,3.400 h-4.700 l5.300,-6z" fill="#f4f4f4" stroke="#6f6f6f" stroke-width="1" stroke-linejoin="miter"/>
</g>
<!-- ===== tab bar icons ===== -->
<g id="ic-tab">
<circle cx="1822.750" cy="89.750" r="13.100" stroke="#666" stroke-width="2.300"/>
<path d="M1819.300,85.800 c0,-2.200 1.500,-3.500 3.500,-3.500 c2.100,0 3.500,1.300 3.500,3.100 c0,2.600 -3.300,2.900 -3.300,5.600" stroke="#666" stroke-width="2.200" stroke-linecap="butt"/>
<circle cx="1823" cy="95.600" r="1.500" fill="#666"/>
<path d="M1876.100,80.500 v-2 q0,-1.200 2,-1.200 q1.900,0 1.900,1.200 v2 c3.600,1 5.300,4.100 5.600,8 c.3,3.800 1,6.400 3.600,8.700 v2.100 h-22.300 v-2.100 c2.600,-2.300 3.300,-4.900 3.600,-8.700 c.3,-3.900 2,-7 5.600,-8z M1875,101.200 h6.200 q-.6,2.500 -3.100,2.500 q-2.500,0 -3.100,-2.500z" fill="#a8a8a8"/>
</g>
<!-- ===== toolbar row 1 ===== -->
<g id="ic-row1" stroke="#6a6a6a" stroke-width="2">
<g stroke="#b4b4b4" stroke-width="1.900">
<path d="M31.600,133 H49.600 L55.200,138.600 V156.400 Q55.200,157.700 53.900,157.700 H31.600 Q30.300,157.700 30.300,156.400 V134.300 Q30.300,133 31.600,133Z"/>
<path d="M37,133.500 V142.700 H48.200 V133.500" stroke-width="1.600"/><path d="M43.500,136.300 v3.400" stroke-width="1.200"/>
<rect x="36.600" y="149.300" width="12.400" height="8" fill="#dedede" stroke-width="1.600"/>
</g>
<path d="M102.2,131.3 L105.9,141.8 L117.0,142.1 L108.1,148.8 L111.3,159.5 L102.2,153.2 L93.0,159.5 L96.2,148.8 L87.3,142.1 L98.4,141.8 Z" stroke-width="2.1" stroke-linejoin="round"/>
<path d="M156.800,155.400 H153.800 C150,155.400 147.900,152.700 147.900,149.800 C147.900,146.700 150.200,144.400 153.300,144.300 C153.300,138 157.400,133.400 162.600,133.400 C167,133.400 170.100,136.300 171,140.400 C174.200,140.700 175.600,143.700 175.600,147.500 C175.600,152 173.200,155.400 169.200,155.400 H166.200" stroke-width="2.4"/>
<path d="M161.500,159.800 V143.800 M157,148 L161.500,143.300 L166,148" stroke-width="2.4"/>
<g>
<rect x="205.300" y="138.900" width="29.300" height="13.600" rx="2.200" fill="#6a6a6a" stroke="none"/>
<path d="M209.900,139 V132.200 Q209.900,131.500 210.700,131.500 H229.500 Q230.300,131.500 230.300,132.200 V139" stroke-width="2"/>
<rect x="209.900" y="146.600" width="20.400" height="11.600" rx="1" fill="#fafafa" stroke-width="2"/>
<rect x="211" y="147.600" width="18.200" height="2.600" fill="#dcdcdc" stroke="none"/>
<path d="M215.700,151.400 H224.600 M215.700,154.400 H224.600" stroke-width="1.300" stroke-linecap="butt"/>
<circle cx="229.600" cy="143.400" r=".9" fill="#fafafa" stroke="none"/>
</g>
<circle cx="278.500" cy="143" r="10.900" stroke-width="2.500"/>
<path d="M286.700,151.500 L295.600,160" stroke-width="2.700"/>
<g fill="#6a6a6a" stroke="none"><circle cx="273.900" cy="143" r="1.400"/><circle cx="278.500" cy="143" r="1.400"/><circle cx="283.100" cy="143" r="1.400"/></g>
<g stroke="#b4b4b4" stroke-width="2.100">
<circle cx="433.800" cy="138.200" r="3.500"/><circle cx="433.800" cy="151.800" r="3.500"/>
<path d="M436.800,140.300 L442,143.600 L455.800,152 L455.200,154.800 L440.400,145.600 L436,142.600z M436.800,149.700 L442,146.400 L455.800,138 L455.200,135.200 L440.400,144.400 L436,147.400z" fill="#b4b4b4" stroke-width=".6"/>
</g>
<circle cx="502.250" cy="145.400" r="13" stroke-width="2.300"/>
<path d="M502.250,152.600 V138.600 M495.700,145 L502.250,138.400 L508.800,145" stroke-width="2.300"/>
<circle cx="561.900" cy="145.400" r="13" stroke-width="2.300"/>
<path d="M561.900,138.200 V152.200 M555.350,145.800 L561.900,152.400 L568.450,145.800" stroke-width="2.300"/>
<path d="M605,164 H653" stroke="#dcdcdc" stroke-width="1.200"/>
<g stroke="#b6b6b6"><rect x="761.200" y="134.300" width="27.400" height="18.600" rx="1.500" stroke-width="2.400" fill="#f0f0f0"/><path d="M762.500,151.600 L787.300,135.600 V151.600z" fill="#e2e2e2" stroke="none"/><path d="M769.500,157.500 H780.500" stroke-width="2.600" stroke-linecap="butt"/><path d="M772,154.200 h6" stroke-width="2" stroke-linecap="butt"/></g>
<path d="M819.400,126.300 V164 M1342.500,126.300 V164" stroke="#dadada" stroke-width="1.200"/>
<path d="M856.300,131.400 L856.300,154.500 L861.300,150 L865.500,158.800 L869,157.100 L865,148.500 L872.500,147.700 Z" fill="#6e6e6e" stroke="#6e6e6e" stroke-width=".8"/>
<path d="M914.800,151 V136.400 a2.600,2.600 0 0 1 5.200,0 V145.600 M920,136.200 V133.400 a2.700,2.700 0 0 1 5.400,0 V145.600 M925.400,134.600 a2.700,2.700 0 0 1 5.400,0 V145.600 M930.800,138.800 a2.600,2.600 0 0 1 5.200,0 V149.500 C936,156.600 931.300,160.500 924.300,160.500 C917.300,160.500 913.800,156.300 910.800,150.300 C909.600,148 908.300,146.700 908.600,145.400 C909.100,143.600 911.500,143.500 912.800,145.400 L914.800,148.600" stroke="#1473e6" stroke-width="1.900"/>
<circle cx="981.900" cy="144.900" r="12.900" stroke-width="2.300"/><path d="M975.800,145.100 H988.300" stroke-width="2.500"/>
<circle cx="1041.500" cy="144.900" r="12.900" stroke-width="2.300"/><path d="M1035.200,145.100 H1047.900 M1041.550,138.900 V151.500" stroke-width="2.500"/>
<path d="M1085,164 H1179" stroke="#dcdcdc" stroke-width="1.200"/>
<path d="M1158.800,143.200 h9.300 l-4.650,5.800z M1241.600,143.200 h9.300 l-4.650,5.800z" fill="#6a6a6a" stroke="none"/>
<g stroke-linecap="butt" stroke-linejoin="miter"><path d="M1211.200,129.500 V137.500 H1232 V129.500" stroke-width="2.300"/><path d="M1210,141.300 H1233.200" stroke="#dcdcdc" stroke-width="1.600"/><path d="M1211.200,161.500 V145.500 H1224 L1232,153.500 V161.500" stroke-width="2.300"/><path d="M1224,146 V153.500 H1231.500" stroke-width="1.600"/><path d="M1215.500,158.600 H1228 M1218,156.200 l-2.600,2.400 l2.600,2.400 M1225.500,156.200 l2.600,2.400 l-2.600,2.400" stroke-width="1.300"/></g>
<rect x="1284.300" y="133.300" width="27.300" height="9.600" rx="1.500" stroke-width="2.400"/>
<path d="M1290,136.600 v3 M1294,136.600 v3 M1298,136.600 v3 M1302,136.600 v3 M1306,136.600 v3" stroke-width="1.700" stroke-linecap="butt"/>
<path d="M1298,147.600 V159.200 M1292.300,153.800 L1298,159.600 L1303.700,153.800" stroke-width="2.300"/>
</g>
<!-- ===== toolbar row 1 right ===== -->
<g id="ic-row1b" stroke="#6a6a6a" stroke-width="2.200">
<path d="M1388.300,131.900 L1397.400,140.800 L1394,143.300 L1385.800,135.200z" fill="#dedede" stroke="none"/>
<path d="M1371.500,158 L1376.400,142.800 L1384.300,138.500 L1388.300,131.900 L1397.400,140.800 L1390.200,145.300 L1385.600,155.700 Z"/>
<path d="M1384.300,138.500 L1390.200,145.300" stroke-width="1.800"/>
<path d="M1372.200,157.300 L1380.400,149.100" stroke-width="1.500"/><circle cx="1381.300" cy="148.200" r="1.500" stroke-width="1.500"/>
<path d="M1388.300,158.400 c2.300,-.6 3.300,-2.600 3.700,-4.200 c.2,-.8 .9,-.7 .8,.1 c-.3,2.200 .1,3.800 1.500,3.600 c1.400,-.2 2.100,-1.900 2.500,-3.600 c.2,-.8 .9,-.7 .8,.1 c-.3,2.100 .2,3.600 1.500,3.400 c1.200,-.2 1.700,-1.300 2,-2.600" stroke-width="1.600"/>
<path d="M1434.400,135.600 V132.800 Q1434.400,131.800 1435.400,131.800 H1447 L1455.500,140.500 V143 M1434.400,147 V156.600 Q1434.400,157.600 1435.400,157.600 H1442.500"/>
<path d="M1447,132.300 V140.500 H1455" stroke-width="1.700"/>
<rect x="1429.400" y="136" width="11.300" height="7.600" fill="#6a6a6a" stroke="none"/>
<path d="M1444.600,160.700 L1446.100,155.100 L1457.300,143.900 Q1458.800,142.600 1460.200,143.900 L1461,144.700 Q1462.300,146.100 1461,147.600 L1449.800,158.900 Z" fill="#fafafa" stroke-width="1.800"/>
<path d="M1446.100,155.100 L1449.800,158.900 M1448,156.900 L1459,146" stroke-width="1.100"/>
<path d="M1492,135.100 H1519.900 M1500.800,134.600 V132.800 Q1500.800,131.800 1501.800,131.800 H1510.200 Q1511.200,131.800 1511.200,132.800 V134.600" stroke-width="2.300"/>
<path d="M1495.100,136 L1496.700,157.600 Q1496.800,158.800 1498,158.800 H1513.900 Q1515.100,158.800 1515.200,157.600 L1516.800,136" stroke-width="2.300"/>
<path d="M1502.300,140.800 L1502.900,153.800 M1506,140.800 V153.800 M1509.700,140.800 L1509.100,153.800" stroke-width="1.300"/>
<path d="M1557.800,156.800 A11.800,11.800 0 1 1 1575.300,149.600" stroke-width="2.500" stroke-linecap="butt"/>
<path d="M1568,150.200 L1579.500,154.700 L1571.400,158.300 Z" fill="#6a6a6a" stroke="#6a6a6a" stroke-width="1"/>
<g transform="translate(1864.91 128.61) scale(1.32)" stroke-width="2.050"><path d="M10 13a5 5 0 0 0 7.54.54l3-3a5 5 0 0 0-7.07-7.07l-1.72 1.71"/><path d="M14 11a5 5 0 0 0-7.54-.54l-3 3a5 5 0 0 0 7.07 7.07l1.71-1.71"/></g>
<path d="M1884.500,159.800 C1882.500,159.800 1881.600,158.400 1881.700,157 C1881.800,155.500 1883,154.500 1884.500,154.500 C1884.800,150.700 1887.500,148.200 1890.700,148.200 C1893.500,148.200 1895.500,150 1896.200,152.500 C1898.500,152.500 1900,154.100 1900,156.200 C1900,158.300 1898.500,159.800 1896.500,159.800 Z" fill="#6a6a6a" stroke="#fafafa" stroke-width="1.200"/>
<rect x="1929.700" y="134.800" width="26.700" height="19.800" rx="1.300" stroke-width="2.600"/>
<path d="M1930.500,137.300 L1943,147.700 L1955.600,137.300 M1930.500,153.500 L1939.800,145.200 M1955.600,153.500 L1946.300,145.200" stroke-width="1.300"/>
<clipPath id="cpUser"><circle cx="2002.600" cy="145.200" r="12.300"/></clipPath>
<circle cx="2002.600" cy="145.200" r="14.200" fill="#6a6a6a" stroke="none"/>
<path clip-path="url(#cpUser)" d="M1989,160 C1990,152.500 1996,152.200 1999,150 C2000,149.200 2000,148 1999.300,147 C1997.600,145 1996.700,142.600 1996.700,140 C1996.700,136 1999.200,133.400 2002.600,133.400 C2006,133.400 2008.500,136 2008.500,140 C2008.500,142.600 2007.600,145 2005.900,147 C2005.200,148 2005.200,149.200 2006.200,150 C2009.200,152.200 2015.200,152.500 2016.200,160 Z" fill="#fafafa" stroke="none"/>
<circle cx="2013.300" cy="155" r="7" fill="#fafafa" stroke="none"/>
<path d="M2008.400,155 H2018.200 M2013.300,150.100 V159.900" stroke-width="2.300" stroke-linecap="butt"/>
</g>
<!-- ===== toolbar row 2 ===== -->
<g id="ic-row2" stroke="#6a6a6a" stroke-width="2.200">
<path d="M470.500,196.600 H492 Q494.300,196.600 494.300,198.900 V212.500 Q494.300,214.800 492,214.800 H484.300 L476.300,222.300 V214.800 H470.500 Q468.200,214.800 468.200,212.500 V198.900 Q468.200,196.600 470.500,196.600Z" fill="#dcdcdc"/>
<path d="M473.600,203.800 H489 M473.600,207.600 H486.200" stroke-width="1.100" stroke-linecap="butt"/>
<rect x="533.800" y="216.800" width="21.800" height="6" fill="#dedede" stroke="none"/>
<path d="M526.200,221 L530.600,214.800 L535.300,218.800 L532,221.600 Z" fill="#6a6a6a" stroke-width="1.200"/>
<path d="M530.800,213.800 L533.600,209.200 L547.600,196 Q549.800,194.200 552,196.200 L553.300,197.500 Q555.200,199.700 553.300,201.900 L540.600,216.300 L536,219.300 Z" fill="#dedede"/>
<path d="M533.600,209.200 L540.600,216.300" stroke-width="1.800"/>
<g font-family="DejaVu Serif, Liberation Serif, serif" font-size="30.800" fill="#6a6a6a" stroke-width=".7" text-anchor="middle">
<text x="600.500" y="219" textLength="19" lengthAdjust="spacingAndGlyphs">T</text>
<text x="659.800" y="219" textLength="19" lengthAdjust="spacingAndGlyphs">T</text>
<text x="712.600" y="219" textLength="19" lengthAdjust="spacingAndGlyphs">T</text>
<text x="773.600" y="219" textLength="19" lengthAdjust="spacingAndGlyphs">T</text>
<text x="838.500" y="219" textLength="19" lengthAdjust="spacingAndGlyphs">T</text>
<text x="895.600" y="213.300" font-size="17" textLength="11.500" lengthAdjust="spacingAndGlyphs" stroke-width=".4">T</text>
</g>
<path d="M589.800,222.500 H611" stroke-width="1.200" stroke-linecap="butt"/>
<path d="M649,209.300 H672" stroke-width="1.300" stroke-linecap="butt"/>
<path d="M703.400,209.300 H716" stroke-width="1.300" stroke-linecap="butt"/>
<path d="M721.500,205.600 H733 Q735.200,205.600 735.200,207.800 V214.800 Q735.200,217 733,217 H729.800 L724,222.400 V217 H721.500 Q719.300,217 719.300,214.800 V207.800 Q719.300,205.600 721.500,205.600Z" fill="#dcdcdc" stroke-width="2"/>
<path d="M723.800,210.300 H730.800 M723.800,212.900 H730.800" stroke-width="1" stroke-linecap="butt"/>
<path d="M781.400,221.800 V218 L787.800,212 L794.200,218 V221.800 H791 L787.800,218.600 L784.600,221.800 Z" fill="#dcdcdc" stroke-width="1.700"/>
<rect x="886.200" y="197.100" width="23.900" height="23.300" stroke-width="2.300"/>
<g fill="#fafafa" stroke-width="1.300"><circle cx="886.200" cy="197.100" r="1.900"/><circle cx="910.100" cy="197.100" r="1.900"/><circle cx="886.200" cy="220.400" r="1.900"/><circle cx="910.100" cy="220.400" r="1.900"/></g>
<path d="M943,222.800 L946.400,213.400 L965,194.800 Q966.200,193.800 967.400,194.800 L971.700,199 Q972.700,200.200 971.700,201.400 L952.800,220 Z" fill="#dcdcdc"/>
<path d="M946.400,213.400 L952.800,220 M962.400,197.400 L969,204" stroke-width="1.800"/>
<path d="M943,222.800 L944.600,218.400 L947.500,221.300z" fill="#6a6a6a" stroke-width="1"/>
<path d="M1003,216.500 Q1001.600,215 1003,213.600 L1021.400,195.800 Q1022.700,194.700 1024,195.800 L1032.400,203.800 Q1033.600,205.100 1032.400,206.400 L1017.200,221.900 H1008.500 Z" fill="#fafafa"/>
<path d="M1011.200,205.700 L1021.400,195.800 Q1022.700,194.700 1024,195.800 L1032.400,203.800 Q1033.600,205.100 1032.400,206.400 L1022.500,216.500 Z" fill="#dcdcdc" stroke="none"/>
<path d="M1011.200,205.700 L1022.500,216.500" stroke-width="1.800"/><path d="M1016.800,211 L1027.300,200.600" stroke-width="1"/>
<path d="M1002,222.500 H1018" stroke-width="1.300" stroke-linecap="butt"/><path d="M1020.300,222.500 H1030.500" stroke-width="1.300" stroke-linecap="butt" stroke-dasharray="2.400 1.500"/>
<circle cx="1076.300" cy="199.500" r="6.600" stroke-width="2.300"/>
<path d="M1072.800,205.200 V209.600 M1079.800,205.200 V209.600"/>
<rect x="1066.800" y="218.400" width="19.800" height="5.300" fill="#dcdcdc" stroke-width="2.100" rx=".6"/>
<rect x="1064.300" y="209.700" width="24.800" height="8.700" rx="1.200" stroke-width="2.300" fill="#fafafa"/>
<path d="M1095.700,206.600 h9.500 l-4.750,5.700z M1171.900,206.600 h9.500 l-4.750,5.700z M1247.500,206.600 h9.500 l-4.750,5.700z" fill="#6a6a6a" stroke="none"/>
<path d="M1146.800,206.200 L1155,197.400 C1157.200,195 1160,194.800 1161.900,196.600 C1163.800,198.400 1163.800,201.200 1161.600,203.600 L1148.600,217.400 C1145.800,220.400 1142.400,220.600 1140.200,218.400 C1138,216.200 1138.200,212.800 1141,209.800 L1153,197" stroke-width="2.400"/>
<path d="M1155.800,198 L1143.600,210.800 C1139.600,215 1140.400,219.600 1146,220.200" stroke-width="0"/>
<circle cx="1158.100" cy="215.300" r="8.800" fill="#fafafa" stroke="none"/><circle cx="1158.100" cy="215.300" r="7.700" fill="#6a6a6a" stroke="none"/>
<path d="M1153.700,215.300 H1162.500 M1158.100,210.900 V219.700" stroke="#fafafa" stroke-width="2.300" stroke-linecap="butt"/>
<path d="M1222,212.700 H1214 L1231.300,195.300 V205.500" stroke-width="2.300" stroke-linejoin="round"/>
<path d="M1234.600,201.600 H1242.200 V214 H1238.500" stroke-width="2.300" stroke-linejoin="miter" stroke-linecap="butt"/>
<circle cx="1230" cy="215.300" r="7" stroke-width="2.400" fill="#fafafa"/>
<path d="M1288.800,189.600 V227.100 M1376.600,189.600 V227.100" stroke="#dcdcdc" stroke-width="1.300"/>
<g fill="#b6b6b6" stroke="#b6b6b6">
<path d="M1335.700,196.400 L1345,205.700 Q1345.600,206.600 1344.700,207.200 L1343.300,207.400 L1337.800,212.300 Q1339.600,215.600 1337.200,217.800 L1324.200,204.800 Q1326.400,202.400 1329.700,204.200 L1334.600,198.700 L1334.800,197.300 Q1335.300,196.300 1335.700,196.400Z" stroke-width="1.500"/>
<path d="M1330.200,211.200 L1320.200,220.200" stroke-width="2.300"/>
<path d="M1319.500,221.800 H1337.500" stroke="#e6e6e6" stroke-width="1.200"/>
</g>
<g stroke="#b6b6b6">
<path d="M1419.300,196 L1432.800,208.800 L1418.200,222 L1405.200,209.200 Z" stroke-width="2.500"/>
<path d="M1420.400,205.800 C1417.800,201 1415.300,197.600 1413.800,196.700 C1412.600,196.300 1412.300,197.500 1413.200,199.400 C1414.300,201.500 1416,203.600 1417.500,205" stroke-width="1.400"/>
<circle cx="1420.200" cy="206" r="1.700" fill="#b6b6b6" stroke="none"/>
<path d="M1433.100,209.600 C1435.300,212.900 1436.900,215.400 1436.900,217.500 C1436.900,219.500 1435.300,220.900 1433.200,220.900 C1431.100,220.900 1429.500,219.500 1429.500,217.500 C1429.500,215.400 1431,212.900 1433.100,209.600Z" fill="#b6b6b6" stroke="none"/>
<path d="M1465.300,196.900 H1493.800" stroke-width="1.600" stroke-dasharray="5 3.100" stroke-linecap="butt"/>
<path d="M1465.300,202.400 H1493.800" stroke-width="1" stroke-linecap="butt"/>
<path d="M1466.500,208.400 H1492.500" stroke-width="2.700"/>
<rect x="1465.300" y="214" width="28.500" height="5" rx="1" fill="#b6b6b6" stroke="none"/>
</g>
<text x="1523" y="217.800" font-family="Liberation Sans, sans-serif" font-size="28.600" fill="#b2b2b2" stroke="none" textLength="33" lengthAdjust="spacingAndGlyphs">Aa</text>
<rect x="1915.700" y="187.700" width="103" height="41.500" rx="20.750" stroke="#444" stroke-width="1.500"/>
</g>
<!-- ===== panel icons ===== -->
<g id="ic-panel" stroke="#6a6a6a" stroke-width="2.300">
<path d="M1564,306.600 H1976" stroke="#d6d6d6" stroke-width="1.200" stroke-linecap="butt"/>
<circle cx="1816.400" cy="269.700" r="9.900" stroke-width="2.400"/><path d="M1823.900,277.500 L1830.600,284.200" stroke-width="2.600"/>
<g font-family="Liberation Sans, sans-serif" font-size="15.400" fill="#6a6a6a" stroke-width=".8" text-anchor="middle">
<text x="1862.500" y="271" textLength="10.600" lengthAdjust="spacingAndGlyphs">A</text>
<text x="1862.500" y="285.400" textLength="10.400" lengthAdjust="spacingAndGlyphs">Z</text></g>
<path d="M1857.400,272.700 H1867.600" stroke-width="1.200" stroke-linecap="butt"/>
<path d="M1894.600,262.900 H1917.400 L1908.900,275.400 V282.400 L1903.800,285.300 V275.400 Z" fill="#6a6a6a" stroke-width="1" stroke-linejoin="miter"/>
<g fill="#6a6a6a" stroke="none"><circle cx="1939.700" cy="273.200" r="2.800"/><circle cx="1949.200" cy="273.200" r="2.800"/><circle cx="1958.700" cy="273.200" r="2.800"/></g>
<g stroke="#555" stroke-width="1.400" stroke-linecap="butt" stroke-linejoin="miter">
<path d="M1921.600,325.300 L1927.400,331.600 L1933.200,325.300"/><path d="M1921.600,489.800 L1927.400,496.100 L1933.200,489.800"/><path d="M1921.600,678.600 L1927.400,684.900 L1933.200,678.600"/><path d="M1921.600,976.800 L1927.400,983.100 L1933.200,976.800"/><path d="M1921.600,1140.300 L1927.400,1146.600 L1933.200,1140.300"/>
</g>
<g stroke="#505050" stroke-width="2.100" stroke-linecap="butt" stroke-linejoin="miter">
<path d="M1961.300,322 L1965.100,318 L1968.900,322"/><path d="M1961.300,1293.800 L1965.100,1297.800 L1968.900,1293.800"/>
<path d="M1511.100,255.300 L1514.900,251.300 L1518.700,255.300"/><path d="M1511.100,1294.600 L1514.900,1298.600 L1518.700,1294.600"/>
</g>
<path d="M19.300,767 L27.200,773.800 L19.300,780.600Z M1536.800,767 L1544.700,773.800 L1536.800,780.600Z" fill="#555" stroke="none"/>
</g>
<!-- ===== avatars ===== -->
<g id="ic-avatars" fill="#fff" stroke="none" font-family="DejaVu Serif, serif" font-weight="bold" font-size="17.600">
<g id="avRep"><circle cx="1600.500" cy="389" r="16.200" fill="#6e6e6e"/>
<text x="1599.300" y="396.600" text-anchor="middle" textLength="12" lengthAdjust="spacingAndGlyphs" font-size="18.600" stroke="#fff" stroke-width=".5">T</text>
<rect x="1596" y="387.200" width="7" height="2.200" fill="#6e6e6e"/><rect x="1596" y="391.200" width="7" height="1.600" fill="#6e6e6e"/>
<rect x="1591.100" y="389.400" width="15.800" height="1.800"/>
<path d="M1605.700,392.300 h4.600 q.9,0 .9,.9 v2.200 q0,.9 -.9,.9 h-1.800 l-1.500,1.600 v-1.600 h-1.300 q-.9,0 -.9,-.9 v-2.200 q0,-.9 .9,-.9z"/></g>
<g id="avIns"><circle cx="1600.500" cy="552.600" r="16.200" fill="#6e6e6e"/>
<text x="1597.800" y="559.100" text-anchor="middle" textLength="12.300" lengthAdjust="spacingAndGlyphs" font-size="18.600" stroke="#fff" stroke-width=".5">T</text>
<path d="M1602,559.100 V557.300 L1606,553 L1610,557.300 V559.100 H1608.300 L1606,556.700 L1603.700,559.100Z"/></g>
<g id="avBub"><circle cx="1600.500" cy="741.600" r="16.200" fill="#6e6e6e"/>
<path d="M1595.200,735.800 h10.600 q1.500,0 1.500,1.500 v7 q0,1.500 -1.500,1.500 h-5 l-3.600,3.300 v-3.300 h-2 q-1.500,0 -1.500,-1.500 v-7 q0,-1.500 1.500,-1.500z"/>
<path d="M1596.700,739.300 h7.600 M1596.700,742.300 h5.600" stroke="#6e6e6e" stroke-width="1.200" stroke-linecap="butt"/></g>
<use href="#avRep" y="487.400"/><use href="#avRep" y="651.200"/><use href="#avIns" y="651.100"/>
</g>
<!-- ===== right strip ===== -->
<g id="ic-strip" stroke-width="2.400">
<g stroke="#1a9a9a"><path d="M1996.500,258 H2010.500 L2016.200,263.700 V281.600 H1996.500 Q1995.700,281.600 1995.700,280.800 V258.800 Q1995.700,258 1996.500,258Z" fill="#cfe9ea"/>
<path d="M2000.500,274.500 c2.200,-.8 4,-3.600 4.200,-7.200 c0,-1.200 -1.400,-1.200 -1.400,0 c0,2.200 1.900,4.600 4.400,5.100 c1.200,.2 1.200,-1.200 0,-1.100 c-2.500,.1 -5.300,1.200 -6.900,2.400" stroke-width="1"/>
<circle cx="2016.100" cy="279.300" r="8.300" fill="#1a9a9a" stroke="#fafafa" stroke-width="1.500"/>
<path d="M2011.600,279.300 H2019.800 M2016.600,275.600 L2020.300,279.300 L2016.600,283" stroke="#fff" stroke-width="2.200" stroke-linecap="butt" stroke-linejoin="miter"/></g>
<g stroke="#e0359a"><rect x="1994.500" y="320.500" width="27" height="10" rx="1.500" fill="#f5d5e9"/><rect x="1994.500" y="336.500" width="11.600" height="10.300" rx="1.500" fill="#f5d5e9"/>
<path d="M2012.300,336.800 H2022.700 M2012.300,341.200 H2022.700 M2012.300,345.600 H2022.700" stroke-width="1.300" stroke-linecap="butt"/></g>
<g stroke="#e0344c"><path d="M1997,382.500 H2011 L2016.200,387.700 V406.200 H1997 Q1996.200,406.200 1996.200,405.400 V383.300 Q1996.200,382.500 1997,382.500Z" fill="#f9d5da"/>
<path d="M2001,399 c2.200,-.8 4,-3.600 4.200,-7.200 c0,-1.200 -1.400,-1.200 -1.400,0 c0,2.200 1.900,4.600 4.400,5.100 c1.200,.2 1.200,-1.200 0,-1.100 c-2.500,.1 -5.300,1.200 -6.900,2.400" stroke-width="1"/>
<circle cx="2016.200" cy="404.400" r="8.200" fill="#e0344c" stroke="#fafafa" stroke-width="1.500"/>
<path d="M2011.800,404.400 H2020.600 M2016.200,400 V408.800" stroke="#fff" stroke-width="2.300" stroke-linecap="butt"/></g>
<g stroke="#fff"><path d="M1997.800,446.400 H2018.400 Q2020,446.400 2020,448 V462.700 Q2020,464.300 2018.400,464.300 H2010.600 L2003.300,471.600 V464.300 H1997.800 Q1996.200,464.300 1996.200,462.700 V448 Q1996.200,446.400 1997.800,446.400Z" stroke-width="2.500"/>
<path d="M2000.200,452.700 H2018 M2000.200,458 H2013.200" stroke-width="2.300" stroke-linecap="butt"/></g>
<g stroke="#6b67e8"><path d="M2004.800,512 V506.600 Q2004.800,505.700 2003.900,505.700 H1994.100 Q1993.200,505.700 1993.200,506.600 V521.700 Q1993.200,522.600 1994.100,522.600 H2002.500" stroke-width="2.200"/>
<path d="M1997.200,517.300 c1.500,-.6 2.800,-2.500 2.900,-5 c0,-.9 -1,-.9 -1,0 c0,1.600 1.300,3.300 3.100,3.600 c.8,.2 .8,-.8 0,-.7 c-1.700,.1 -3.700,.8 -4.800,1.700" stroke-width=".9"/>
<path d="M2008.300,504 H2019 L2024.100,509.100 V525.300 H2008.300Z" fill="#6b67e8" stroke="none"/><path d="M2019,504 V509.100 H2024.100Z" fill="#fafafa" stroke="none"/>
<path d="M2005.800,518 H2008.800 V529 H2015.200 L2007.300,536 L1999.400,529 H2005.800Z" fill="#6b67e8" stroke="#fafafa" stroke-width="1"/></g>
<g stroke="#7ac943"><rect x="2010.800" y="570.700" width="10.800" height="23.300" rx="1.500" fill="#e0f0d4"/>
<path d="M1996.200,583 H2006.200 V593.600 H1996.200Z" stroke-width="2.200" stroke-dasharray="2.800 2" stroke-linecap="butt"/>
<path d="M2006.400,570.600 C2002.500,571 1999.500,573 1997.800,576" stroke-width="2.200"/><path d="M1996,571.300 L1996.600,578.300 L2003,575.700Z" fill="#7ac943" stroke-width="1"/></g>
<g stroke="#1a9a9a"><path d="M1998.700,632.500 H2013 L2018.500,638 V641 M2018.500,650 V655.700 Q2018.500,656.500 2017.700,656.500 H1999.500 Q1998.700,656.500 1998.700,655.700 V650 M1998.700,641 V632.500" fill="none"/>
<path d="M1998.700,632.500 H2013 L2018.500,638 V656.500 H1998.700Z" fill="#cfe9ea" stroke="none"/>
<path d="M1998.700,632.500 H2013 L2018.500,638 V641 M2018.500,650 V655.700 Q2018.500,656.500 2017.700,656.500 H1999.500 Q1998.700,656.500 1998.700,655.700 V650 M1998.700,641 V633.300 Q1998.700,632.500 1999.500,632.500"/>
<path d="M1994,640 L1998.600,645 L1994,650.200 M2023.600,640 L2019,645 L2023.600,650.200" stroke-width="2.200"/>
<path d="M2003.200,649.500 c2.400,-.9 4.400,-3.900 4.600,-7.800 c0,-1.300 -1.500,-1.300 -1.500,0 c0,2.400 2.100,5 4.800,5.600 c1.300,.2 1.300,-1.300 0,-1.200 c-2.700,.1 -5.800,1.300 -7.500,2.600" stroke-width="1.100"/></g>
<g stroke="#e0359a"><rect x="2006.400" y="711.600" width="16.300" height="6.900" fill="#e0359a" stroke="none"/>
<path d="M1993.600,718.400 L1998.200,712.400 L2003.300,716.800 L2000.600,718.500Z" fill="#e0359a" stroke-width="1.200"/>
<path d="M1998.600,711.200 L2001,707.400 L2015.300,697 Q2017.200,695.600 2018.900,697.200 L2019.900,698.200 Q2021.300,700 2019.900,701.900 L2008.200,714.200 L2003.800,716.400 Z" fill="#f5d5e9" stroke-width="2.300"/></g>
<g stroke="#6b67e8"><path d="M2007.900,756.200 C2004.500,758.800 2001,759.900 1997.300,760.200 V769.500 C1997.300,776.500 2001.500,781 2007.900,784 C2014.300,781 2018.600,776.500 2018.600,769.500 V760.200 C2014.900,759.900 2011.400,758.800 2007.900,756.200Z" fill="none" stroke-width="2.500"/>
<path d="M2007.900,757.500 C2004.800,759.700 2001.600,760.900 1998.500,761.200 V769.500 C1998.500,775.700 2002.200,780 2007.900,782.700Z" fill="#d9d8f7" stroke="none"/></g>
<g stroke="#c837c8"><path d="M1998.400,820 H2013.200 L2018.500,825.300 V843.700 Q2018.500,844.500 2017.700,844.500 H1998.400 Q1997.600,844.500 1997.600,843.700 V820.800 Q1997.600,820 1998.400,820Z" fill="#f1d6f1"/>
<path d="M2002,826.700 H2008.600 M2002,829.800 H2013.600 M2002,832.900 H2013.600" stroke-width="1.100" stroke-linecap="butt"/>
<path d="M2002.300,836 h3 v3.400 l-1.500,1.800 l-1.500,-1.800z" fill="#c837c8" stroke-width=".6"/><path d="M2010.400,837 l3.400,3.400 M2013.800,837 l-3.400,3.400" stroke-width="1.300"/></g>
<g stroke="#9b51e0"><path d="M1993.600,906.800 L1996.800,898 L2013.700,882.800 Q2015.100,881.700 2016.400,882.900 L2018.800,885.200 Q2019.900,886.500 2018.800,887.800 L2002.700,904.200 Z" fill="#e6d5f7" stroke-width="2.500"/>
<path d="M1996.800,898 L2002.700,904.200" stroke-width="1.800"/>
<path d="M1993.600,906.800 H2004 C2007,906.600 2009.500,905 2010.800,902.200 C2011.300,901.100 2012.400,901.300 2012.200,902.500 C2011.800,905 2012.400,906.800 2014.300,906.600 C2016,906.400 2017,904.700 2017.500,902.600 C2017.800,901.500 2018.900,901.700 2018.700,902.800 C2018.400,905 2019,906.500 2020.600,906.300 C2021.900,906.100 2022.600,904.900 2023,903.400" stroke-width="2.200"/></g>
<g stroke="#e0be00"><path d="M1995.400,941.700 H2008.400 L2014.400,947.700 V966.800 H1995.400 Q1994.600,966.800 1994.600,966 V942.500 Q1994.600,941.700 1995.400,941.700Z" fill="#f5efc5"/>
<path d="M2008.400,942.200 V947.700 H2014" stroke-width="1.800"/>
<path d="M2009.300,956.300 H2021.700 Q2022.700,956.300 2022.700,957.300 V967 Q2022.700,968 2021.700,968 H2015 L2011.600,971.500 V968 H2009.300 Q2008.300,968 2008.300,967 V957.300 Q2008.300,956.300 2009.300,956.300Z" fill="#e0be00" stroke="#fafafa" stroke-width="1"/>
<path d="M2012.200,960.600 H2018.800 M2012.200,963.600 H2018.800" stroke="#fff" stroke-width="1.300" stroke-linecap="butt"/></g>
<g stroke="#6e6e6e"><path d="M1996.600,1026 L2009.300,1013.300" stroke-width="4.600"/>
<path d="M2018,1005.600 C2014.600,1004.700 2011.300,1006 2009.700,1008.800 C2008.600,1010.800 2008.600,1013 2009.400,1014.800 L2012.500,1017 C2014.500,1017.600 2016.800,1017.200 2018.400,1015.700 C2019.800,1014.300 2020.400,1012.500 2020.200,1010.600 L2016.400,1014 L2013,1013.200 L2012.300,1009.800 Z" fill="#6e6e6e" stroke-width="1"/>
<circle cx="2016.200" cy="1027.300" r="9.300" fill="#fafafa" stroke="none"/><circle cx="2016.200" cy="1027.300" r="8.200" fill="#6e6e6e" stroke="none"/>
<path d="M2011.600,1027.300 H2020.800 M2016.200,1022.700 V1031.900" stroke="#fafafa" stroke-width="2.400" stroke-linecap="butt"/></g>
</g>
</svg>
</div>
</body>
</html>
